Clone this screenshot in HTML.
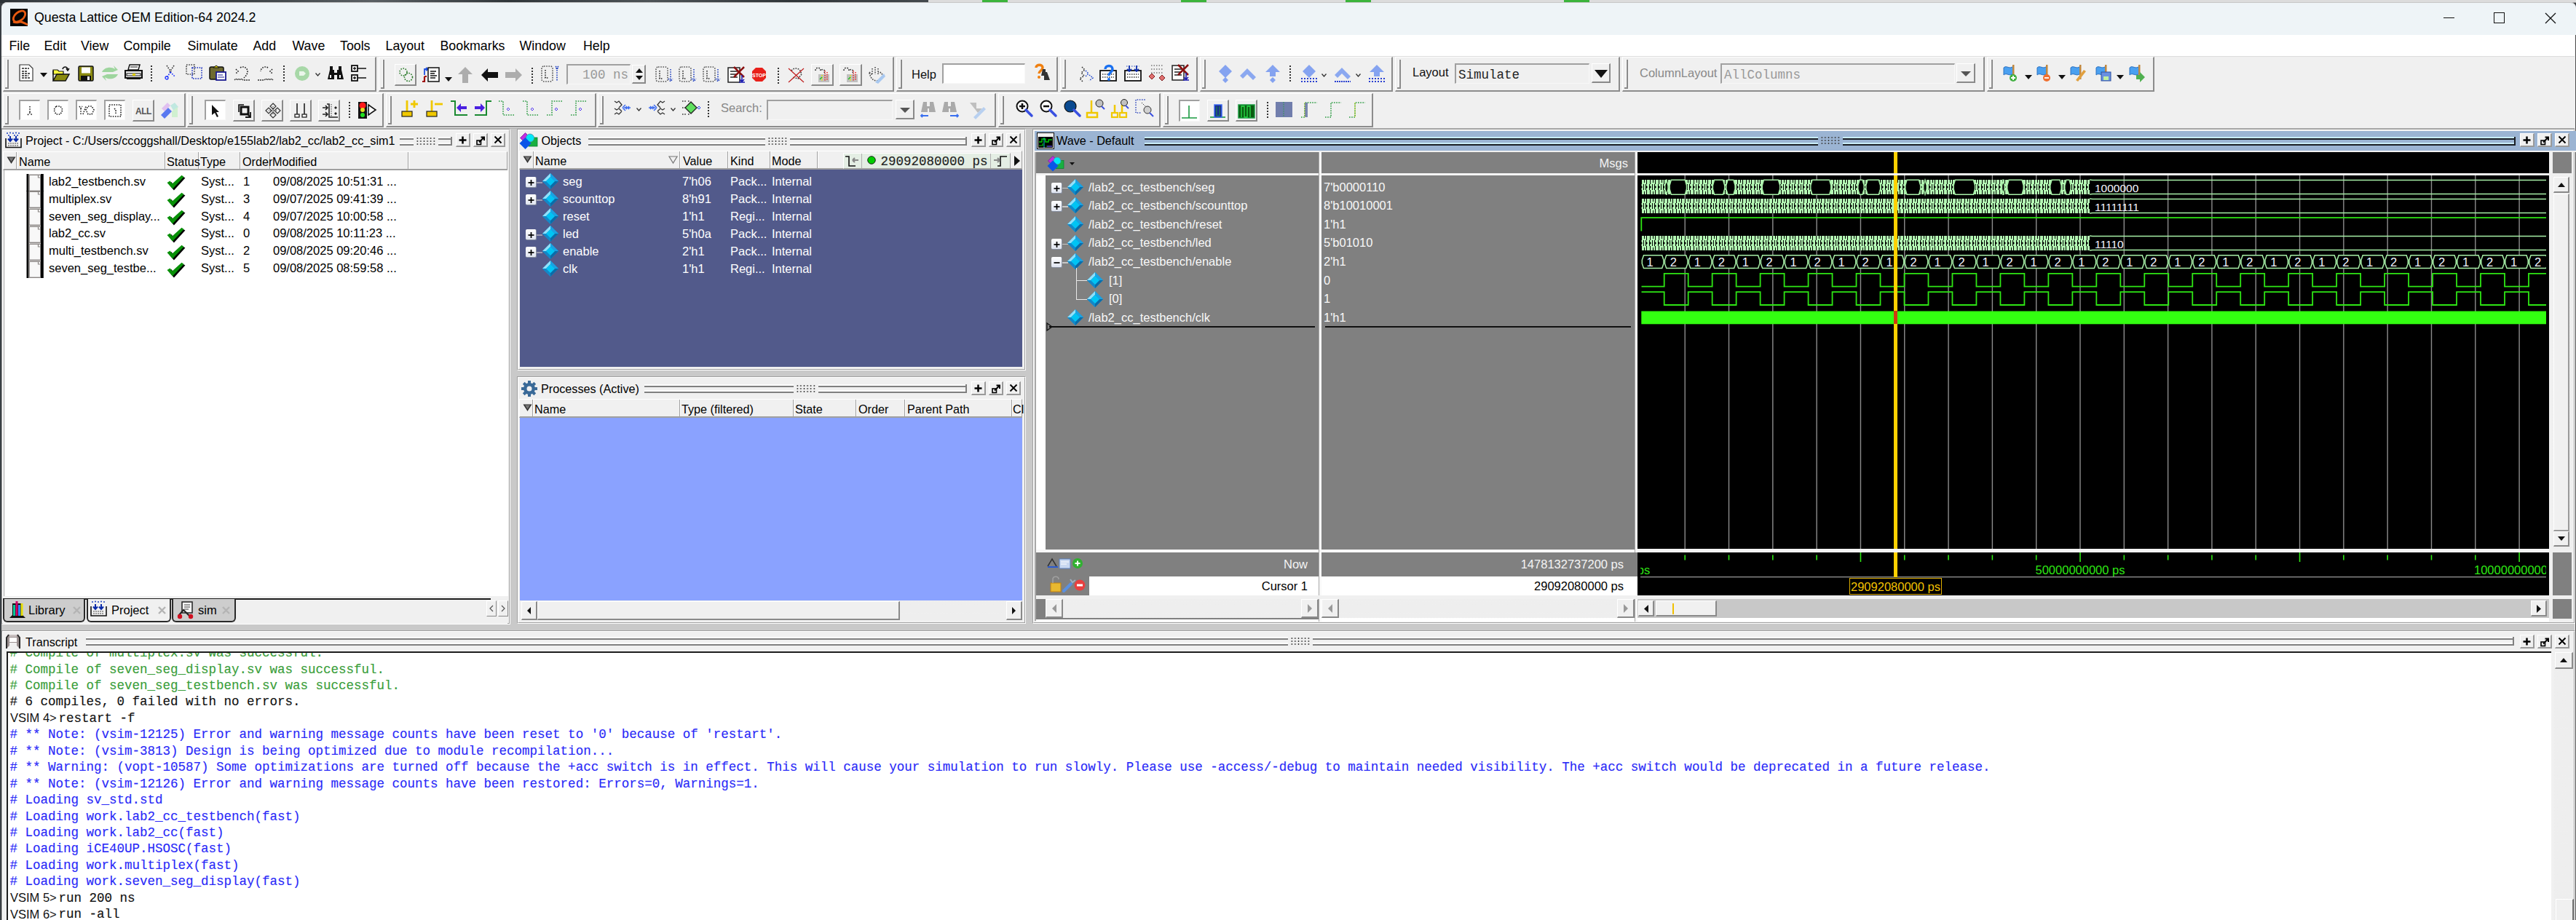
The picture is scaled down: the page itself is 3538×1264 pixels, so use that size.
<!DOCTYPE html>
<html><head><meta charset="utf-8"><style>
html,body{margin:0;padding:0;width:3538px;height:1264px;overflow:hidden;background:#3a3f44}
div{position:absolute;box-sizing:border-box}
.t{white-space:pre;line-height:1;font-family:"Liberation Sans",sans-serif}
svg{position:absolute;overflow:visible}
</style></head><body>
<div style="left:0px;top:0px;width:3538px;height:1264px;background:#3a3f44"></div>
<div style="left:0px;top:0px;width:1275px;height:4px;background:linear-gradient(90deg,#2c3236 0,#4a5054 10%,#3a4044 25%,#5a6064 40%,#30363a 55%,#4e5458 70%,#30363a 85%,#444a4e 100%)"></div>
<div style="left:1275px;top:0px;width:2263px;height:4px;background:#dcdcdc;border-bottom:1px solid #a0a0a0"></div>
<div style="left:1349px;top:0px;width:35px;height:3px;background:#3cb43c"></div>
<div style="left:1622px;top:0px;width:35px;height:3px;background:#3cb43c"></div>
<div style="left:1848px;top:0px;width:35px;height:3px;background:#3cb43c"></div>
<div style="left:2148px;top:0px;width:35px;height:3px;background:#3cb43c"></div>
<div style="left:2px;top:3px;width:3536px;height:1261px;background:#f0f0f0;border-top-left-radius:8px;border-top-right-radius:8px"></div>
<div style="left:2px;top:3px;width:3536px;height:45px;background:#eef4f7;border-top-left-radius:8px;border-top-right-radius:8px;border-top:1px solid #c8c8c8"></div>
<div style="left:3537px;top:48px;width:1px;height:1216px;background:#505050"></div>
<svg style="left:14px;top:12px;" width="24" height="24" viewBox="0 0 24 24"><rect width="24" height="24" fill="#050505"/><ellipse cx="12.5" cy="10.5" rx="9.5" ry="5.8" transform="rotate(-40 12.5 10.5)" fill="none" stroke="#e85a10" stroke-width="2.8"/><path d="M4 18 C9 20 12 18 14 18 C17 18 20 20 24 22" fill="none" stroke="#e85a10" stroke-width="2.8"/></svg>
<div class="t" style="left:47px;top:16.37px;font-size:17.8px;color:#000;font-family:'Liberation Sans', sans-serif;">Questa Lattice OEM Edition-64 2024.2</div>
<div style="left:3356px;top:24px;width:15px;height:1.2px;background:#111"></div>
<div style="left:3425px;top:17px;width:15px;height:15px;border:1.4px solid #111"></div>
<svg style="left:3495px;top:17px;" width="16" height="16" viewBox="0 0 16 16"><path d="M1 1 L15 15 M15 1 L1 15" stroke="#111" stroke-width="1.3"/></svg>
<div style="left:2px;top:48px;width:3534px;height:29px;background:#fff"></div>
<div style="left:2px;top:77px;width:3534px;height:1px;background:#dcdcdc"></div>
<div class="t" style="left:12.5px;top:54.87px;font-size:17.8px;color:#000;font-family:'Liberation Sans', sans-serif;">File</div>
<div class="t" style="left:60.5px;top:54.87px;font-size:17.8px;color:#000;font-family:'Liberation Sans', sans-serif;">Edit</div>
<div class="t" style="left:111px;top:54.87px;font-size:17.8px;color:#000;font-family:'Liberation Sans', sans-serif;">View</div>
<div class="t" style="left:169.5px;top:54.87px;font-size:17.8px;color:#000;font-family:'Liberation Sans', sans-serif;">Compile</div>
<div class="t" style="left:257.5px;top:54.87px;font-size:17.8px;color:#000;font-family:'Liberation Sans', sans-serif;">Simulate</div>
<div class="t" style="left:347.5px;top:54.87px;font-size:17.8px;color:#000;font-family:'Liberation Sans', sans-serif;">Add</div>
<div class="t" style="left:401.5px;top:54.87px;font-size:17.8px;color:#000;font-family:'Liberation Sans', sans-serif;">Wave</div>
<div class="t" style="left:467px;top:54.87px;font-size:17.8px;color:#000;font-family:'Liberation Sans', sans-serif;">Tools</div>
<div class="t" style="left:529.5px;top:54.87px;font-size:17.8px;color:#000;font-family:'Liberation Sans', sans-serif;">Layout</div>
<div class="t" style="left:604.5px;top:54.87px;font-size:17.8px;color:#000;font-family:'Liberation Sans', sans-serif;">Bookmarks</div>
<div class="t" style="left:713.5px;top:54.87px;font-size:17.8px;color:#000;font-family:'Liberation Sans', sans-serif;">Window</div>
<div class="t" style="left:801px;top:54.87px;font-size:17.8px;color:#000;font-family:'Liberation Sans', sans-serif;">Help</div>
<div style="left:4px;top:78px;width:513px;height:48px;border-top:1px solid #fff;border-left:1px solid #fff;border-right:2px solid #8c8c8c;border-bottom:2px solid #8c8c8c"></div>
<div style="left:9px;top:82px;width:1px;height:38px;background:#fff"></div>
<div style="left:10px;top:82px;width:2px;height:40px;background:#8a8a8a"></div>
<div style="left:7px;top:120px;width:5px;height:2px;background:#8a8a8a"></div>
<div style="left:520px;top:78px;width:708px;height:48px;border-top:1px solid #fff;border-left:1px solid #fff;border-right:2px solid #8c8c8c;border-bottom:2px solid #8c8c8c"></div>
<div style="left:525px;top:82px;width:1px;height:38px;background:#fff"></div>
<div style="left:526px;top:82px;width:2px;height:40px;background:#8a8a8a"></div>
<div style="left:523px;top:120px;width:5px;height:2px;background:#8a8a8a"></div>
<div style="left:1231px;top:78px;width:222px;height:48px;border-top:1px solid #fff;border-left:1px solid #fff;border-right:2px solid #8c8c8c;border-bottom:2px solid #8c8c8c"></div>
<div style="left:1236px;top:82px;width:1px;height:38px;background:#fff"></div>
<div style="left:1237px;top:82px;width:2px;height:40px;background:#8a8a8a"></div>
<div style="left:1234px;top:120px;width:5px;height:2px;background:#8a8a8a"></div>
<div style="left:1456px;top:78px;width:189px;height:48px;border-top:1px solid #fff;border-left:1px solid #fff;border-right:2px solid #8c8c8c;border-bottom:2px solid #8c8c8c"></div>
<div style="left:1461px;top:82px;width:1px;height:38px;background:#fff"></div>
<div style="left:1462px;top:82px;width:2px;height:40px;background:#8a8a8a"></div>
<div style="left:1459px;top:120px;width:5px;height:2px;background:#8a8a8a"></div>
<div style="left:1648px;top:78px;width:265px;height:48px;border-top:1px solid #fff;border-left:1px solid #fff;border-right:2px solid #8c8c8c;border-bottom:2px solid #8c8c8c"></div>
<div style="left:1653px;top:82px;width:1px;height:38px;background:#fff"></div>
<div style="left:1654px;top:82px;width:2px;height:40px;background:#8a8a8a"></div>
<div style="left:1651px;top:120px;width:5px;height:2px;background:#8a8a8a"></div>
<div style="left:1916px;top:78px;width:309px;height:48px;border-top:1px solid #fff;border-left:1px solid #fff;border-right:2px solid #8c8c8c;border-bottom:2px solid #8c8c8c"></div>
<div style="left:1921px;top:82px;width:1px;height:38px;background:#fff"></div>
<div style="left:1922px;top:82px;width:2px;height:40px;background:#8a8a8a"></div>
<div style="left:1919px;top:120px;width:5px;height:2px;background:#8a8a8a"></div>
<div style="left:2228px;top:78px;width:498px;height:48px;border-top:1px solid #fff;border-left:1px solid #fff;border-right:2px solid #8c8c8c;border-bottom:2px solid #8c8c8c"></div>
<div style="left:2233px;top:82px;width:1px;height:38px;background:#fff"></div>
<div style="left:2234px;top:82px;width:2px;height:40px;background:#8a8a8a"></div>
<div style="left:2231px;top:120px;width:5px;height:2px;background:#8a8a8a"></div>
<div style="left:2729px;top:78px;width:230px;height:48px;border-top:1px solid #fff;border-left:1px solid #fff;border-right:2px solid #8c8c8c;border-bottom:2px solid #8c8c8c"></div>
<div style="left:2734px;top:82px;width:1px;height:38px;background:#fff"></div>
<div style="left:2735px;top:82px;width:2px;height:40px;background:#8a8a8a"></div>
<div style="left:2732px;top:120px;width:5px;height:2px;background:#8a8a8a"></div>
<div style="left:4px;top:128px;width:251px;height:47px;border-top:1px solid #fff;border-left:1px solid #fff;border-right:2px solid #8c8c8c;border-bottom:2px solid #8c8c8c"></div>
<div style="left:9px;top:132px;width:1px;height:37px;background:#fff"></div>
<div style="left:10px;top:132px;width:2px;height:39px;background:#8a8a8a"></div>
<div style="left:7px;top:169px;width:5px;height:2px;background:#8a8a8a"></div>
<div style="left:257px;top:128px;width:270px;height:47px;border-top:1px solid #fff;border-left:1px solid #fff;border-right:2px solid #8c8c8c;border-bottom:2px solid #8c8c8c"></div>
<div style="left:262px;top:132px;width:1px;height:37px;background:#fff"></div>
<div style="left:263px;top:132px;width:2px;height:39px;background:#8a8a8a"></div>
<div style="left:260px;top:169px;width:5px;height:2px;background:#8a8a8a"></div>
<div style="left:530px;top:128px;width:289px;height:47px;border-top:1px solid #fff;border-left:1px solid #fff;border-right:2px solid #8c8c8c;border-bottom:2px solid #8c8c8c"></div>
<div style="left:535px;top:132px;width:1px;height:37px;background:#fff"></div>
<div style="left:536px;top:132px;width:2px;height:39px;background:#8a8a8a"></div>
<div style="left:533px;top:169px;width:5px;height:2px;background:#8a8a8a"></div>
<div style="left:821px;top:128px;width:547px;height:47px;border-top:1px solid #fff;border-left:1px solid #fff;border-right:2px solid #8c8c8c;border-bottom:2px solid #8c8c8c"></div>
<div style="left:826px;top:132px;width:1px;height:37px;background:#fff"></div>
<div style="left:827px;top:132px;width:2px;height:39px;background:#8a8a8a"></div>
<div style="left:824px;top:169px;width:5px;height:2px;background:#8a8a8a"></div>
<div style="left:1371px;top:128px;width:223px;height:47px;border-top:1px solid #fff;border-left:1px solid #fff;border-right:2px solid #8c8c8c;border-bottom:2px solid #8c8c8c"></div>
<div style="left:1376px;top:132px;width:1px;height:37px;background:#fff"></div>
<div style="left:1377px;top:132px;width:2px;height:39px;background:#8a8a8a"></div>
<div style="left:1374px;top:169px;width:5px;height:2px;background:#8a8a8a"></div>
<div style="left:1597px;top:128px;width:289px;height:47px;border-top:1px solid #fff;border-left:1px solid #fff;border-right:2px solid #8c8c8c;border-bottom:2px solid #8c8c8c"></div>
<div style="left:1602px;top:132px;width:1px;height:37px;background:#fff"></div>
<div style="left:1603px;top:132px;width:2px;height:39px;background:#8a8a8a"></div>
<div style="left:1600px;top:169px;width:5px;height:2px;background:#8a8a8a"></div>
<div style="left:2px;top:176px;width:3534px;height:1px;background:#a8a8a8"></div>
<svg style="left:26px;top:88px" width="21" height="24" viewBox="0 0 21 24"><path d="M1 1 H14 L19 6 V23 H1 Z" fill="#fff" stroke="#333" stroke-width="1.2"/><path d="M19 6 V23 H2" stroke="#888" stroke-width="1.5" fill="none"/><path d="M4 6 H14 M4 10 H11 M4 13 H15 M4 16 H13 M4 19 H15" stroke="#222" stroke-width="1.4" stroke-dasharray="3 1"/></svg>
<svg style="left:55px;top:100px" width="10" height="6" viewBox="0 0 10 6"><path d="M0 0 H10 L5 6 Z" fill="#111"/></svg>
<svg style="left:72px;top:89px" width="24" height="23" viewBox="0 0 24 23"><path d="M14 6 C15 2 20 2 21 6 M19 5 L21 8 L23 5" fill="none" stroke="#111" stroke-width="1.5"/><path d="M1 7 H7 L9 9 H15 V13 H1 Z" fill="#ffff40" stroke="#111" stroke-width="1.2"/><path d="M1 22 V8 M1 22 L6 13 H23 L18 22 Z" fill="#8a8a10" stroke="#111" stroke-width="1.5"/></svg>
<svg style="left:107px;top:90px" width="22" height="22" viewBox="0 0 22 22"><rect x="1" y="1" width="20" height="20" rx="1.5" fill="#8a8a10" stroke="#111" stroke-width="1.5"/><rect x="5" y="2.5" width="12" height="8" fill="#fff"/><rect x="4" y="14" width="14" height="7" fill="#111"/><rect x="13" y="15" width="3" height="5" fill="#fff"/></svg>
<svg style="left:138px;top:88px" width="26" height="25" viewBox="0 0 26 25"><path d="M2 11 C5 4 15 3 20 7 L18 2 L24 8 L17 11 Z" fill="#8fd08f" opacity="0.85"/><path d="M24 14 C21 21 11 22 6 18 L8 23 L2 17 L9 14 Z" fill="#8fd08f" opacity="0.85"/></svg>
<svg style="left:171px;top:88px" width="26" height="23" viewBox="0 0 26 23"><path d="M7 1 H21 L19 8 H5 Z" fill="#fff" stroke="#111" stroke-width="1.5"/><path d="M8 4 H18" stroke="#111"/><path d="M1 9 H24 V19 H1 Z" fill="#e8e8e8" stroke="#111" stroke-width="2"/><rect x="3" y="13" width="19" height="3" fill="#fff" stroke="#111"/><rect x="11" y="13" width="4" height="3" fill="#e0d000"/><path d="M3 20 H22" stroke="#111" stroke-width="2"/></svg>
<div style="left:207px;top:90px;width:2px;height:23px;background-image:linear-gradient(#333 50%,transparent 50%);background-size:2px 4px"></div>
<svg style="left:226px;top:89px" width="16" height="22" viewBox="0 0 16 22"><path d="M3 1 L9 10 M13 1 L7 10" stroke="#333" stroke-width="1.6" stroke-dasharray="1.6 1.6" fill="none"/><path d="M8 10 L3 18 M8 10 L14 16" stroke="#1a30ff" stroke-width="1.6" stroke-dasharray="1.6 1.6" fill="none"/><circle cx="3" cy="18" r="2" fill="none" stroke="#1a30ff" stroke-width="1.3"/></svg>
<svg style="left:255px;top:88px" width="24" height="21" viewBox="0 0 24 21"><rect x="1" y="1" width="11" height="13" stroke="#444" stroke-width="1.6" stroke-dasharray="1.6 1.6" fill="none"/><rect x="9" y="5" width="13" height="15" stroke="#1a30c0" stroke-width="1.6" stroke-dasharray="1.6 1.6" fill="none"/></svg>
<svg style="left:287px;top:89px" width="25" height="22" viewBox="0 0 25 22"><rect x="1" y="3" width="19" height="17" rx="2" fill="#6e6a30" stroke="#111" stroke-width="1.5"/><path d="M6 4 L10 1 L14 4 Z" fill="#f0e000" stroke="#111"/><rect x="10" y="10" width="13" height="11" fill="#fff" stroke="#1a1a90" stroke-width="1.8"/><path d="M12 14 H19 M12 17 H21" stroke="#1a1a90" stroke-width="1.2"/></svg>
<svg style="left:321px;top:90px" width="24" height="22" viewBox="0 0 24 22"><path d="M3 5 L6 8 L3 11 M9 3 C14 0 19 4 19 8 C19 12 16 15 14 17" stroke="#222" stroke-width="1.6" stroke-dasharray="1.6 1.6" fill="none"/><path d="M1 20 L3 18 L5 20 L7 18 L9 20 L11 18 L13 20 H22" fill="none" stroke="#333" stroke-width="1.3" stroke-dasharray="2 1"/></svg>
<svg style="left:353px;top:90px" width="24" height="22" viewBox="0 0 24 22"><path d="M21 5 L18 8 L21 11 M15 3 C10 0 5 4 5 8" stroke="#222" stroke-width="1.6" stroke-dasharray="1.6 1.6" fill="none"/><path d="M1 20 H10 L12 18 L14 20 L16 18 L18 20 L20 18 L22 20" fill="none" stroke="#333" stroke-width="1.3" stroke-dasharray="2 1"/></svg>
<div style="left:389px;top:90px;width:2px;height:23px;background-image:linear-gradient(#333 50%,transparent 50%);background-size:2px 4px"></div>
<svg style="left:404px;top:90px" width="22" height="22" viewBox="0 0 22 22"><circle cx="11" cy="11" r="10" fill="#a8d8a8"/><path d="M7 8 H13 L16 11 L13 14 H7 Z" fill="#eaf6ea"/></svg>
<svg style="left:433px;top:100px" width="7" height="5" viewBox="0 0 7 5"><path d="M0.5 0.5 L3.5 4 L6.5 0.5" fill="none" stroke="#333" stroke-width="1.3"/></svg>
<svg style="left:449px;top:90px" width="24" height="21" viewBox="0 0 24 21"><path d="M4 1 H8 V6 H10 V10 H14 V6 H16 V1 H20 V6 L23 19 H14 V13 H10 V19 H1 L4 6 Z" fill="#111"/><rect x="4" y="13" width="2" height="4" fill="#fff"/><rect x="17" y="13" width="2" height="4" fill="#fff"/></svg>
<svg style="left:482px;top:89px" width="22" height="24" viewBox="0 0 22 24"><rect x="1" y="1" width="8" height="8" fill="#fff" stroke="#111" stroke-width="1.8"/><rect x="1" y="14" width="8" height="8" fill="#fff" stroke="#111" stroke-width="1.8"/><path d="M3 5 H7 M5 3 V7 M3 18 H7 M5 16 V20 M9 5 H21 M9 18 H21" stroke="#111" stroke-width="1.3"/></svg>
<div style="left:542px;top:88px;width:30px;height:30px;background:#f0f0f0;border-top:1px solid #fff;border-left:1px solid #fff;border-right:2px solid #8a8a8a;border-bottom:2px solid #8a8a8a"></div>
<svg style="left:547px;top:92px" width="22" height="22" viewBox="0 0 22 22"><circle cx="7" cy="7" r="5" stroke="#2a7a2a" stroke-width="1.6" stroke-dasharray="1.6 1.6" fill="none"/><circle cx="14" cy="14" r="5.5" stroke="#2a7a2a" stroke-width="1.6" stroke-dasharray="1.6 1.6" fill="none"/></svg>
<svg style="left:579px;top:91px" width="28" height="24" viewBox="0 0 28 24"><path d="M4 12 V4 H8 M6 2 L9 4 L6 6" fill="none" stroke="#2050e0" stroke-width="1.8"/><path d="M4 14 V21 H1 M4 14 H7" fill="none" stroke="#a01010" stroke-width="2.2"/><rect x="9" y="2" width="15" height="19" fill="#fff" stroke="#111" stroke-width="1.5"/><path d="M12 7 H20 M12 10 H18 M12 13 H21 M12 16 H19" stroke="#111" stroke-width="1.4"/></svg>
<svg style="left:611px;top:106px" width="10" height="6" viewBox="0 0 10 6"><path d="M0 0 H10 L5 6 Z" fill="#111"/></svg>
<svg style="left:628px;top:91px" width="22" height="24" viewBox="0 0 22 24"><path d="M11 1 L21 11 H15 V23 H7 V11 H1 Z" fill="#909090" opacity="0.7"/></svg>
<svg style="left:660px;top:93px" width="25" height="20" viewBox="0 0 25 20"><path d="M1 10 L10 1 V6 H24 V14 H10 V19 Z" fill="#111"/></svg>
<svg style="left:693px;top:93px" width="25" height="20" viewBox="0 0 25 20"><path d="M24 10 L15 1 V6 H1 V14 H15 V19 Z" fill="#909090" opacity="0.7"/></svg>
<div style="left:730px;top:93px;width:2px;height:23px;background-image:linear-gradient(#333 50%,transparent 50%);background-size:2px 4px"></div>
<svg style="left:743px;top:90px" width="26" height="24" viewBox="0 0 26 24"><rect x="1" y="1" width="15" height="21" rx="3" stroke="#555" stroke-width="1.6" stroke-dasharray="1.6 1.6" fill="none"/><path d="M6 6 V17 H11" stroke="#222" stroke-width="1.6" stroke-dasharray="1.6 1.6" fill="none"/><path d="M20 1 L24 5 M24 1 L20 5 M22 6 V22" stroke="#2040c0" stroke-width="1.6" stroke-dasharray="1.6 1.6" fill="none"/></svg>
<div style="left:778px;top:88px;width:88px;height:28px;background:#f0f0f0;border-top:2px solid #a0a0a0;border-left:2px solid #a0a0a0;border-right:1px solid #f8f8f8;border-bottom:1px solid #f8f8f8"></div>
<div class="t" style="left:800px;top:94.7px;font-size:17.5px;color:#999;font-family:'Liberation Mono',monospace">100 ns</div>
<div style="left:868px;top:89px;width:19px;height:26px;background:#f0f0f0;border-top:1px solid #fff;border-left:1px solid #fff;border-right:2px solid #8a8a8a;border-bottom:2px solid #8a8a8a"></div>
<svg style="left:872px;top:92px" width="12" height="20" viewBox="0 0 12 20"><path d="M1 8 L6 2 L11 8 Z M1 12 L6 18 L11 12 Z" fill="#111"/></svg>
<svg style="left:900px;top:91px" width="26" height="23" viewBox="0 0 26 23"><rect x="1" y="1" width="16" height="20" rx="3" stroke="#555" stroke-width="1.6" stroke-dasharray="1.6 1.6" fill="none"/><path d="M6 6 V17 H11" stroke="#222" stroke-width="1.6" stroke-dasharray="1.6 1.6" fill="none"/><path d="M21 4 V20 M18 17 L21 21 L24 17" stroke="#2040c0" stroke-width="1.6" stroke-dasharray="1.6 1.6" fill="none"/></svg>
<svg style="left:932px;top:91px" width="26" height="23" viewBox="0 0 26 23"><rect x="1" y="1" width="16" height="20" rx="3" stroke="#555" stroke-width="1.6" stroke-dasharray="1.6 1.6" fill="none"/><path d="M6 6 V17 H11" stroke="#222" stroke-width="1.6" stroke-dasharray="1.6 1.6" fill="none"/><path d="M21 4 V20 M18 17 L21 21 L24 17" stroke="#2040c0" stroke-width="1.6" stroke-dasharray="1.6 1.6" fill="none"/></svg>
<svg style="left:965px;top:91px" width="26" height="23" viewBox="0 0 26 23"><rect x="1" y="1" width="16" height="20" rx="3" stroke="#555" stroke-width="1.6" stroke-dasharray="1.6 1.6" fill="none"/><path d="M6 6 V17 H11" stroke="#222" stroke-width="1.6" stroke-dasharray="1.6 1.6" fill="none"/><path d="M21 4 V20 M18 17 L21 21 L24 17" stroke="#2040c0" stroke-width="1.6" stroke-dasharray="1.6 1.6" fill="none"/></svg>
<svg style="left:999px;top:91px" width="26" height="25" viewBox="0 0 26 25"><rect x="1" y="2" width="16" height="20" fill="#fff" stroke="#222" stroke-width="1.5"/><path d="M4 7 H14 M4 11 H12 M4 15 H14" stroke="#222" stroke-width="1.3"/><path d="M9 1 L23 15 M23 1 L9 15" stroke="#8a1010" stroke-width="2.5"/><path d="M20 12 V22 M16 22 H24 M17 18 L20 21 L23 18" stroke="#1a1ab0" stroke-width="1.6" fill="none"/></svg>
<svg style="left:1032px;top:92px" width="21" height="21" viewBox="0 0 21 21"><path d="M6 1 H15 L20 6 V15 L15 20 H6 L1 15 V6 Z" fill="#e8201a"/><text x="10.5" y="13.5" font-size="7" font-family="Liberation Sans" font-weight="bold" fill="#fff" text-anchor="middle">STOP</text></svg>
<div style="left:1068px;top:93px;width:2px;height:23px;background-image:linear-gradient(#333 50%,transparent 50%);background-size:2px 4px"></div>
<svg style="left:1082px;top:92px" width="24" height="22" viewBox="0 0 24 22"><path d="M5 5 C8 1 14 1 17 5 L19 10 L14 16 L6 14" stroke="#333" stroke-width="1.6" stroke-dasharray="1.6 1.6" fill="none"/><path d="M1 2 L22 21 M22 2 L1 21" stroke="#c02020" stroke-width="1.2"/></svg>
<div style="left:1114px;top:88px;width:31px;height:30px;background:#f0f0f0;border-top:1px solid #fff;border-left:1px solid #fff;border-right:2px solid #8a8a8a;border-bottom:2px solid #8a8a8a"></div>
<svg style="left:1118px;top:91px" width="24" height="24" viewBox="0 0 24 24"><path d="M2 6 C2 1 9 1 9 6 C12 3 16 5 14 9" stroke="#333" stroke-width="1.6" stroke-dasharray="1.6 1.6" fill="none"/><rect x="6" y="11" width="15" height="11" fill="#a0a0a0" opacity="0.6"/><path d="M15 6 V20 M18 8 V20" stroke="#f02020" stroke-width="1.5" stroke-dasharray="1.5 1.5"/><path d="M11 12 V20" stroke="#e8e020" stroke-width="2" stroke-dasharray="1.5 1.5"/><path d="M8 18 L11 15" stroke="#20c020" stroke-width="1.5"/></svg>
<div style="left:1153px;top:88px;width:31px;height:30px;background:#f0f0f0;border-top:1px solid #fff;border-left:1px solid #fff;border-right:2px solid #8a8a8a;border-bottom:2px solid #8a8a8a"></div>
<svg style="left:1157px;top:91px" width="24" height="24" viewBox="0 0 24 24"><path d="M2 6 C2 1 9 1 9 6 C12 3 16 5 14 9" stroke="#333" stroke-width="1.6" stroke-dasharray="1.6 1.6" fill="none"/><rect x="6" y="11" width="15" height="11" fill="#a0a0a0" opacity="0.6"/><path d="M15 6 V20 M18 8 V20" stroke="#f02020" stroke-width="1.5" stroke-dasharray="1.5 1.5"/><path d="M11 12 V20" stroke="#e8e020" stroke-width="2" stroke-dasharray="1.5 1.5"/><path d="M8 18 L11 15" stroke="#20c020" stroke-width="1.5"/></svg>
<svg style="left:1192px;top:91px" width="24" height="24" viewBox="0 0 24 24"><path d="M10 1 V11 M6 3 V12 M14 3 V12 M2 8 L6 12 M2 9 C4 18 8 20 14 20 L20 14 C20 10 18 8 14 8" stroke="#444" stroke-width="1.6" stroke-dasharray="1.6 1.6" fill="none"/><path d="M10 22 L22 10 L24 14 L14 24 Z" fill="#a8c8f0"/></svg>
<div class="t" style="left:1252px;top:93.975px;font-size:16.5px;color:#111">Help</div>
<div style="left:1294px;top:87px;width:114px;height:28px;background:#fff;border-top:2px solid #a0a0a0;border-left:2px solid #a0a0a0;border-right:1px solid #f8f8f8;border-bottom:1px solid #f8f8f8"></div>
<svg style="left:1418px;top:88px" width="26" height="24" viewBox="0 0 26 24"><path d="M5 5 C5 0 14 0 14 5 C14 9 9 9 9 13" fill="none" stroke="#f08010" stroke-width="3.5"/><circle cx="9" cy="18" r="2" fill="#f08010"/><path d="M14 7 H18 V11 H20 L24 22 H16 V16 H12" fill="#333"/></svg>
<svg style="left:1479px;top:91px" width="24" height="22" viewBox="0 0 24 22"><path d="M7 1 L11 5 L6 9 L10 13 L4 17 L8 21" stroke="#333" stroke-width="1.6" stroke-dasharray="1.6 1.6" fill="none"/><path d="M12 6 L16 10 L12 14 M17 12 L22 16 L17 20" stroke="#2a50d0" stroke-width="1.6" stroke-dasharray="1.6 1.6" fill="none"/></svg>
<svg style="left:1510px;top:89px" width="26" height="24" viewBox="0 0 26 24"><rect x="1" y="8" width="22" height="14" fill="#fff" stroke="#111" stroke-width="1.8"/><path d="M4 13 H20 M4 17 H20" stroke="#333" stroke-width="1.3" stroke-dasharray="1.5 1.5"/><path d="M8 6 C8 0 18 0 18 6 C18 10 13 10 13 15" fill="none" stroke="#1a70f0" stroke-width="3.5"/><circle cx="13" cy="20" r="2" fill="#1a70f0"/></svg>
<svg style="left:1544px;top:89px" width="24" height="23" viewBox="0 0 24 23"><rect x="1" y="8" width="22" height="14" fill="#fff" stroke="#111" stroke-width="1.8"/><path d="M4 13 H20 M4 17 H20" stroke="#333" stroke-width="1.3" stroke-dasharray="1.5 1.5"/><path d="M7 1 V9 M4 6 L7 9 L10 6 M17 1 V9 M14 6 L17 9 L20 6" stroke="#0a2aa8" stroke-width="1.8" fill="none"/><path d="M3 2 H21" stroke="#1a40c0" stroke-dasharray="1.5 2"/></svg>
<svg style="left:1577px;top:88px" width="24" height="25" viewBox="0 0 24 25"><path d="M4 2 H20 M4 7 H20 M4 12 H20" stroke="#777" stroke-width="1.5" stroke-dasharray="1.5 2"/><path d="M5 13 L9 17 L5 21 L1 17 Z M19 15 L23 19 L19 23 L15 19 Z" fill="#e07070" stroke="#802020"/></svg>
<svg style="left:1609px;top:88px" width="26" height="25" viewBox="0 0 26 25"><rect x="1" y="2" width="16" height="20" fill="#fff" stroke="#222" stroke-width="1.5"/><path d="M4 7 H14 M4 11 H12 M4 15 H14" stroke="#222" stroke-width="1.3"/><path d="M9 1 L23 15 M23 1 L9 15" stroke="#8a1010" stroke-width="2.5"/><path d="M20 12 V22 M16 22 H24 M17 18 L20 21 L23 18" stroke="#1a1ab0" stroke-width="1.6" fill="none"/></svg>
<svg style="left:1672px;top:88px" width="22" height="26" viewBox="0 0 22 26"><path d="M11 1 L20 10 L11 19 L2 10 Z" fill="#6a90f0" opacity="0.8"/><path d="M11 18 L15 22 L11 26 L7 22 Z" fill="#6a90f0" opacity="0.8"/></svg>
<svg style="left:1701px;top:90px" width="26" height="22" viewBox="0 0 26 22"><path d="M2 14 L12 4 L24 16 L20 20 L12 12 L6 18 Z" fill="#6a90f0" opacity="0.75"/></svg>
<svg style="left:1737px;top:88px" width="22" height="26" viewBox="0 0 22 26"><path d="M11 1 L21 11 H15 V17 H7 V11 H1 Z" fill="#6a90f0" opacity="0.8"/><path d="M11 18 L15 22 L11 26 L7 22 Z" fill="#6a90f0" opacity="0.8"/></svg>
<div style="left:1771px;top:90px;width:2px;height:23px;background-image:linear-gradient(#333 50%,transparent 50%);background-size:2px 4px"></div>
<svg style="left:1786px;top:88px" width="24" height="26" viewBox="0 0 24 26"><path d="M12 1 L21 10 L12 19 L3 10 Z" fill="#6a90f0" opacity="0.8"/><path d="M1 20 H23 M1 24 H23" stroke="#2a40d0" stroke-width="2" stroke-dasharray="2 2"/></svg>
<svg style="left:1815px;top:101px" width="7" height="5" viewBox="0 0 7 5"><path d="M0.5 0.5 L3.5 4 L6.5 0.5" fill="none" stroke="#333" stroke-width="1.3"/></svg>
<svg style="left:1831px;top:89px" width="26" height="24" viewBox="0 0 26 24"><path d="M2 14 L12 4 L24 16 L20 20 L12 12 L6 18 Z" fill="#6a90f0" opacity="0.75"/><path d="M2 23 H24" stroke="#2a40d0" stroke-width="2" stroke-dasharray="2 1"/></svg>
<svg style="left:1862px;top:101px" width="7" height="5" viewBox="0 0 7 5"><path d="M0.5 0.5 L3.5 4 L6.5 0.5" fill="none" stroke="#333" stroke-width="1.3"/></svg>
<svg style="left:1879px;top:88px" width="24" height="26" viewBox="0 0 24 26"><path d="M12 1 L22 11 H16 V17 H8 V11 H2 Z" fill="#6a90f0" opacity="0.8"/><path d="M1 20 H23 M1 24 H23" stroke="#2a40d0" stroke-width="2" stroke-dasharray="2 2"/></svg>
<div class="t" style="left:1940px;top:91.27499999999999px;font-size:16.5px;color:#111">Layout</div>
<div style="left:1998px;top:87px;width:185px;height:28px;background:#f0f0f0;border-top:2px solid #a0a0a0;border-left:2px solid #a0a0a0;border-right:1px solid #f8f8f8;border-bottom:1px solid #f8f8f8"></div>
<div class="t" style="left:2003px;top:94.7px;font-size:17.5px;color:#222;font-family:'Liberation Mono',monospace">Simulate</div>
<div style="left:2186px;top:87px;width:26px;height:27px;background:#f0f0f0;border-top:1px solid #fff;border-left:1px solid #fff;border-right:2px solid #8a8a8a;border-bottom:2px solid #8a8a8a"></div>
<svg style="left:2189px;top:95px" width="20" height="13" viewBox="0 0 20 13"><path d="M1 1 H19 L10 12 Z" fill="#111"/></svg>
<div class="t" style="left:2252px;top:91.975px;font-size:16.5px;color:#888">ColumnLayout</div>
<div style="left:2363px;top:87px;width:322px;height:28px;background:#f0f0f0;border-top:2px solid #a0a0a0;border-left:2px solid #a0a0a0;border-right:1px solid #f8f8f8;border-bottom:1px solid #f8f8f8"></div>
<div class="t" style="left:2368px;top:94.7px;font-size:17.5px;color:#999;font-family:'Liberation Mono',monospace">AllColumns</div>
<div style="left:2687px;top:87px;width:26px;height:27px;background:#f0f0f0;border-top:1px solid #fff;border-left:1px solid #fff;border-right:2px solid #8a8a8a;border-bottom:2px solid #8a8a8a"></div>
<svg style="left:2692px;top:97px" width="16" height="8" viewBox="0 0 16 8"><path d="M1 1 H15 L8 8 Z" fill="#555"/></svg>
<svg style="left:2750px;top:88px" width="24" height="26" viewBox="0 0 24 26"><path d="M2 5 C6 1 10 8 15 3 V13 C10 18 6 11 2 15 Z" fill="#4aa0f0" stroke="#2a70c0"/><rect x="14" y="1" width="2.5" height="20" fill="#c08840"/><circle cx="15" cy="19" r="5" fill="#40b040"/><path d="M12 19 H18 M15 16 V22" stroke="#fff" stroke-width="1.8"/></svg>
<svg style="left:2781px;top:103px" width="10" height="6" viewBox="0 0 10 6"><path d="M0 0 H10 L5 6 Z" fill="#111"/></svg>
<svg style="left:2796px;top:88px" width="24" height="26" viewBox="0 0 24 26"><path d="M2 5 C6 1 10 8 15 3 V13 C10 18 6 11 2 15 Z" fill="#4aa0f0" stroke="#2a70c0"/><rect x="14" y="1" width="2.5" height="20" fill="#c08840"/><circle cx="15" cy="19" r="5" fill="#f07030"/><path d="M12 19 H18" stroke="#fff" stroke-width="1.8"/></svg>
<svg style="left:2827px;top:103px" width="10" height="6" viewBox="0 0 10 6"><path d="M0 0 H10 L5 6 Z" fill="#111"/></svg>
<svg style="left:2842px;top:88px" width="24" height="26" viewBox="0 0 24 26"><path d="M2 5 C6 1 10 8 15 3 V13 C10 18 6 11 2 15 Z" fill="#4aa0f0" stroke="#2a70c0"/><rect x="14" y="1" width="2.5" height="20" fill="#c08840"/><path d="M9 22 L20 8 L23 10 L12 24 Z" fill="#e0a040"/></svg>
<svg style="left:2877px;top:88px" width="24" height="26" viewBox="0 0 24 26"><path d="M2 5 C6 1 10 8 15 3 V13 C10 18 6 11 2 15 Z" fill="#4aa0f0" stroke="#2a70c0"/><rect x="14" y="1" width="2.5" height="20" fill="#c08840"/><rect x="9" y="11" width="13" height="12" fill="#6a90e0" stroke="#2a50a0"/><rect x="12" y="17" width="7" height="5" fill="#c0f0a0"/></svg>
<svg style="left:2907px;top:103px" width="10" height="6" viewBox="0 0 10 6"><path d="M0 0 H10 L5 6 Z" fill="#111"/></svg>
<svg style="left:2923px;top:88px" width="24" height="26" viewBox="0 0 24 26"><path d="M2 5 C6 1 10 8 15 3 V13 C10 18 6 11 2 15 Z" fill="#4aa0f0" stroke="#2a70c0"/><rect x="14" y="1" width="2.5" height="20" fill="#c08840"/><path d="M11 15 H16 V11 L23 18 L16 25 V21 H11 Z" fill="#50b050"/></svg>
<div style="left:26px;top:137px;width:29px;height:28px;background:#fff;border-top:2px solid #a0a0a0;border-left:2px solid #a0a0a0;border-right:1px solid #f8f8f8;border-bottom:1px solid #f8f8f8"></div>
<div style="left:65px;top:137px;width:29px;height:28px;background:#fff;border-top:2px solid #a0a0a0;border-left:2px solid #a0a0a0;border-right:1px solid #f8f8f8;border-bottom:1px solid #f8f8f8"></div>
<div style="left:104px;top:137px;width:29px;height:28px;background:#fff;border-top:2px solid #a0a0a0;border-left:2px solid #a0a0a0;border-right:1px solid #f8f8f8;border-bottom:1px solid #f8f8f8"></div>
<div style="left:143px;top:137px;width:29px;height:28px;background:#fff;border-top:2px solid #a0a0a0;border-left:2px solid #a0a0a0;border-right:1px solid #f8f8f8;border-bottom:1px solid #f8f8f8"></div>
<svg style="left:36px;top:145px" width="10" height="14" viewBox="0 0 10 14"><path d="M5 1 V10 M2 13 L5 10 L8 13" stroke="#222" stroke-width="1.6" stroke-dasharray="1.6 1.6" fill="none"/></svg>
<svg style="left:73px;top:145px" width="14" height="13" viewBox="0 0 14 13"><path d="M4 1 H10 L13 6 L10 12 H4 L1 6 Z" stroke="#222" stroke-width="1.6" stroke-dasharray="1.6 1.6" fill="none"/></svg>
<svg style="left:108px;top:145px" width="22" height="13" viewBox="0 0 22 13"><path d="M1 1 L3 4 L5 1 M3 4 V12 M6 12 L10 1" stroke="#222" stroke-width="1.6" stroke-dasharray="1.6 1.6" fill="none"/><path d="M13 1 H18 L21 6 L18 12 H13 L10 6 Z" stroke="#222" stroke-width="1.6" stroke-dasharray="1.6 1.6" fill="none"/></svg>
<svg style="left:149px;top:143px" width="18" height="18" viewBox="0 0 18 18"><rect x="1" y="1" width="16" height="16" stroke="#222" stroke-width="1.6" stroke-dasharray="1.6 1.6" fill="none"/><path d="M8 6 L10 8 V13" stroke="#222" stroke-width="1.6" stroke-dasharray="1.6 1.6" fill="none"/></svg>
<div style="left:182px;top:137px;width:30px;height:30px;background:#f0f0f0;border-top:1px solid #fff;border-left:1px solid #fff;border-right:2px solid #8a8a8a;border-bottom:2px solid #8a8a8a"></div>
<svg style="left:186px;top:146px" width="22" height="12" viewBox="0 0 22 12"><text x="11" y="11" font-size="12" font-family="Liberation Sans" font-weight="bold" fill="#555" text-anchor="middle" letter-spacing="-0.5">ALL</text></svg>
<svg style="left:220px;top:139px" width="26" height="25" viewBox="0 0 26 25"><path d="M2 10 L10 2 L14 6 L6 14 Z" fill="#e0c0f0"/><path d="M14 6 L20 2 L25 8 L19 14 Z" fill="#c0e8e0"/><path d="M1 19 L11 9 L16 14 L6 24 Z" fill="#5a7af0"/><path d="M16 14 L24 8 V22 H16 Z" fill="#d0f0d0"/></svg>
<div style="left:281px;top:137px;width:29px;height:28px;background:#fff;border-top:2px solid #a0a0a0;border-left:2px solid #a0a0a0;border-right:1px solid #f8f8f8;border-bottom:1px solid #f8f8f8"></div>
<svg style="left:290px;top:143px" width="12" height="19" viewBox="0 0 12 19"><path d="M1 1 L11 11 H7 L10 17 L8 18 L5 12 L1 15 Z" fill="#111"/></svg>
<div style="left:320px;top:137px;width:30px;height:30px;background:#f0f0f0;border-top:1px solid #fff;border-left:1px solid #fff;border-right:2px solid #8a8a8a;border-bottom:2px solid #8a8a8a"></div>
<div style="left:359px;top:137px;width:30px;height:30px;background:#f0f0f0;border-top:1px solid #fff;border-left:1px solid #fff;border-right:2px solid #8a8a8a;border-bottom:2px solid #8a8a8a"></div>
<div style="left:398px;top:137px;width:30px;height:30px;background:#f0f0f0;border-top:1px solid #fff;border-left:1px solid #fff;border-right:2px solid #8a8a8a;border-bottom:2px solid #8a8a8a"></div>
<div style="left:437px;top:137px;width:30px;height:30px;background:#f0f0f0;border-top:1px solid #fff;border-left:1px solid #fff;border-right:2px solid #8a8a8a;border-bottom:2px solid #8a8a8a"></div>
<svg style="left:326px;top:142px" width="20" height="21" viewBox="0 0 20 21"><path d="M2 12 V2 H9" fill="none" stroke="#111" stroke-width="1.6"/><rect x="5" y="5" width="10" height="10" fill="none" stroke="#111" stroke-width="3"/><path d="M11 19 H18 V12 M13 14 L18 19" fill="none" stroke="#111" stroke-width="1.8"/></svg>
<svg style="left:364px;top:141px" width="22" height="22" viewBox="0 0 22 22"><path d="M11 1 L15 5 L11 9 L7 5 Z M11 13 L15 17 L11 21 L7 17 Z M1 11 L5 7 L9 11 L5 15 Z M21 11 L17 7 L13 11 L17 15 Z" fill="none" stroke="#333" stroke-width="1.2"/><path d="M11 5 V17 M5 11 H17" stroke="#333" stroke-dasharray="1 1"/></svg>
<svg style="left:404px;top:141px" width="18" height="22" viewBox="0 0 18 22"><path d="M4 1 V17 M14 1 V17" stroke="#222" stroke-width="1.6"/><rect x="1" y="16" width="6" height="4" fill="#fff" stroke="#222" stroke-width="1.3"/><rect x="11" y="16" width="6" height="4" fill="#fff" stroke="#222" stroke-width="1.3"/></svg>
<svg style="left:441px;top:142px" width="24" height="21" viewBox="0 0 24 21"><path d="M2 6 H9 M2 15 H9 M6 3 L9 6 L6 9 M6 12 L9 15 L6 18" stroke="#222" stroke-width="1.6" fill="none"/><path d="M8 1 H11 V19 H23" fill="none" stroke="#222" stroke-width="1.6"/><path d="M14 1 V19" stroke="#333" stroke-dasharray="1.5 1.5"/><path d="M20 4 L22 6 L20 8 L18 6 Z M20 12 L22 14 L20 16 L18 14 Z" fill="#222"/></svg>
<div style="left:479px;top:140px;width:2px;height:24px;background-image:linear-gradient(#333 50%,transparent 50%);background-size:2px 4px"></div>
<svg style="left:491px;top:139px" width="28" height="25" viewBox="0 0 28 25"><rect x="1" y="1" width="12" height="23" fill="#111"/><circle cx="7" cy="6" r="4.5" fill="#ff1a1a"/><circle cx="7" cy="12" r="3" fill="#e0e020"/><circle cx="7" cy="19" r="3" fill="#20e020"/><path d="M15 5 L25 12 L15 19 Z" fill="#fff" stroke="#111" stroke-width="1.6"/><path d="M13 9 H15 M13 15 H15" stroke="#5ab0f0"/></svg>
<svg style="left:551px;top:137px" width="24" height="24" viewBox="0 0 24 24"><path d="M8 1 V16" stroke="#f0c800" stroke-width="2.8"/><rect x="1" y="16" width="14" height="7" fill="#f0c800" stroke="#222" stroke-width="1.2"/><path d="M13 6 H23 M18 1 V11" stroke="#f0c800" stroke-width="2.8"/></svg>
<svg style="left:585px;top:137px" width="24" height="24" viewBox="0 0 24 24"><path d="M8 1 V16" stroke="#f0c800" stroke-width="2.8"/><rect x="1" y="16" width="14" height="7" fill="#f0c800" stroke="#222" stroke-width="1.2"/><path d="M12 6 H23" stroke="#f0c800" stroke-width="2.8"/></svg>
<svg style="left:618px;top:138px" width="24" height="22" viewBox="0 0 24 22"><path d="M1 1 H7 V20 H24" fill="none" stroke="#1a8a30" stroke-width="2"/><path d="M9 10 L15 4 V8 H23 V12 H15 V16 Z" fill="#4a20e0"/></svg>
<svg style="left:651px;top:138px" width="24" height="22" viewBox="0 0 24 22"><path d="M24 1 H17 V20 H1" fill="none" stroke="#1a8a30" stroke-width="2"/><path d="M15 10 L9 4 V8 H1 V12 H9 V16 Z" fill="#4a20e0"/></svg>
<svg style="left:684px;top:138px" width="24" height="22" viewBox="0 0 24 22"><path d="M1 1 H7 V20 H23" stroke="#2a9a40" stroke-width="1.6" stroke-dasharray="1.6 1.6" fill="none"/><path d="M12 12 L14 10 L16 12 L14 14 Z" fill="none" stroke="#5a40f0"/></svg>
<svg style="left:717px;top:138px" width="24" height="22" viewBox="0 0 24 22"><path d="M1 1 H7 V20 H23" stroke="#2a9a40" stroke-width="1.6" stroke-dasharray="1.6 1.6" fill="none"/><path d="M12 12 L14 10 L16 12 L14 14 Z" fill="none" stroke="#5a40f0"/></svg>
<svg style="left:750px;top:138px" width="24" height="22" viewBox="0 0 24 22"><path d="M1 20 H8 V1 H23" stroke="#2a9a40" stroke-width="1.6" stroke-dasharray="1.6 1.6" fill="none"/><path d="M12 12 L14 10 L16 12 L14 14 Z" fill="none" stroke="#5a40f0"/></svg>
<svg style="left:783px;top:138px" width="24" height="22" viewBox="0 0 24 22"><path d="M1 20 H8 V1 H23" stroke="#2a9a40" stroke-width="1.6" stroke-dasharray="1.6 1.6" fill="none"/><path d="M12 12 L14 10 L16 12 L14 14 Z" fill="none" stroke="#5a40f0"/></svg>
<svg style="left:843px;top:137px" width="24" height="22" viewBox="0 0 24 22"><path d="M1 2 L4 4 L7 2 L11 7 L7 11 M1 12 L4 14 L7 12 L11 16 M1 20 L4 18 L7 20 L11 16" fill="none" stroke="#333" stroke-width="1.3"/><path d="M12 11 L16 7 M12 11 L16 15 M14 11 H23 M18 9 L16 11 L18 13 M21 9 L19 11 L21 13" stroke="#3a6af0" stroke-width="1.5" fill="none"/></svg>
<svg style="left:874px;top:148px" width="7" height="5" viewBox="0 0 7 5"><path d="M0.5 0.5 L3.5 4 L6.5 0.5" fill="none" stroke="#333" stroke-width="1.3"/></svg>
<svg style="left:890px;top:137px" width="24" height="22" viewBox="0 0 24 22"><path d="M23 2 L20 4 L17 2 L13 7 L17 11 M23 12 L20 14 L17 12 L13 16 M23 20 L20 18 L17 20 L13 16" fill="none" stroke="#333" stroke-width="1.3"/><path d="M12 11 L8 7 M12 11 L8 15 M10 11 H1 M6 9 L8 11 L6 13 M3 9 L5 11 L3 13" stroke="#3a6af0" stroke-width="1.5" fill="none"/></svg>
<svg style="left:921px;top:148px" width="7" height="5" viewBox="0 0 7 5"><path d="M0.5 0.5 L3.5 4 L6.5 0.5" fill="none" stroke="#333" stroke-width="1.3"/></svg>
<svg style="left:936px;top:137px" width="26" height="24" viewBox="0 0 26 24"><path d="M1 2 H6 M1 11 H6 M1 20 H6 M9 2 H11 M9 20 H11" stroke="#333" stroke-width="1.6" stroke-dasharray="1.6 1.6" fill="none"/><path d="M13 3 L21 11 L13 19 L5 11 Z" fill="#60e060" stroke="#222" stroke-width="1.3"/><path d="M24 9 L26 11 L24 13 L22 11 Z" fill="none" stroke="#2a40f0"/></svg>
<div style="left:972px;top:139px;width:2px;height:24px;background-image:linear-gradient(#333 50%,transparent 50%);background-size:2px 4px"></div>
<div class="t" style="left:990px;top:139.975px;font-size:16.5px;color:#888">Search:</div>
<div style="left:1053px;top:137px;width:173px;height:28px;background:#f0f0f0;border-top:2px solid #a0a0a0;border-left:2px solid #a0a0a0;border-right:1px solid #f8f8f8;border-bottom:1px solid #f8f8f8"></div>
<div style="left:1230px;top:137px;width:26px;height:27px;background:#f0f0f0;border-top:1px solid #fff;border-left:1px solid #fff;border-right:2px solid #8a8a8a;border-bottom:2px solid #8a8a8a"></div>
<svg style="left:1235px;top:147px" width="16" height="8" viewBox="0 0 16 8"><path d="M1 1 H15 L8 8 Z" fill="#555"/></svg>
<svg style="left:1263px;top:138px" width="26" height="25" viewBox="0 0 26 25"><path d="M5 2 H10 V8 H14 V2 H19 L22 16 H13 V11 H11 V16 H2 Z" fill="#999" opacity="0.8"/><path d="M2 21 H12 M4 19 L2 21 L4 23" stroke="#3a70f0" stroke-width="1.8" fill="none"/></svg>
<svg style="left:1292px;top:138px" width="26" height="25" viewBox="0 0 26 25"><path d="M5 2 H10 V8 H14 V2 H19 L22 16 H13 V11 H11 V16 H2 Z" fill="#999" opacity="0.8"/><path d="M13 21 H24 M22 19 L24 21 L22 23" stroke="#3a70f0" stroke-width="1.8" fill="none"/></svg>
<svg style="left:1329px;top:139px" width="26" height="24" viewBox="0 0 26 24"><path d="M3 2 H12 V10 H20 L14 16" fill="#aaa" opacity="0.7"/><path d="M8 22 L22 8 L25 11 L11 25 Z" fill="#b8d0f0"/></svg>
<svg style="left:1395px;top:137px" width="24" height="24" viewBox="0 0 24 24"><circle cx="9" cy="9" r="7.5" fill="#fff" stroke="#111" stroke-width="2"/><path d="M5 9 H13 M9 5 V13" stroke="#111" stroke-width="2.6"/><path d="M14 14 L22 22" stroke="#3a50e0" stroke-width="3.5" stroke-linecap="round"/></svg>
<svg style="left:1428px;top:137px" width="24" height="24" viewBox="0 0 24 24"><circle cx="9" cy="9" r="7.5" fill="#fff" stroke="#111" stroke-width="2"/><path d="M5 9 H13" stroke="#111" stroke-width="2.6"/><path d="M14 14 L22 22" stroke="#3a50e0" stroke-width="3.5" stroke-linecap="round"/></svg>
<svg style="left:1461px;top:137px" width="24" height="24" viewBox="0 0 24 24"><circle cx="9" cy="9" r="8" fill="#0a4a90" stroke="#111" stroke-width="1.2"/><path d="M14 14 L22 22" stroke="#3a50e0" stroke-width="3.5" stroke-linecap="round"/></svg>
<svg style="left:1492px;top:135px" width="26" height="28" viewBox="0 0 26 28"><path d="M7 3 V20" stroke="#f0c800" stroke-width="2.5"/><rect x="1" y="20" width="14" height="6" fill="none" stroke="#f0c800" stroke-width="2.5"/><circle cx="18" cy="7" r="5" fill="#c0c0c0" stroke="#222"/><path d="M21 11 L25 15" stroke="#3a50e0" stroke-width="2"/></svg>
<svg style="left:1526px;top:135px" width="26" height="28" viewBox="0 0 26 28"><path d="M5 9 V20 M15 9 V20" stroke="#f0c800" stroke-width="2.5"/><rect x="1" y="20" width="8" height="6" fill="none" stroke="#f0c800" stroke-width="2.2"/><rect x="12" y="20" width="9" height="6" fill="none" stroke="#f0c800" stroke-width="2.2"/><circle cx="18" cy="6" r="4.5" fill="#c0c0c0" stroke="#222"/><path d="M20 10 L24 14" stroke="#3a50e0" stroke-width="2"/></svg>
<svg style="left:1559px;top:135px" width="26" height="26" viewBox="0 0 26 26"><path d="M1 10 V2 H14" stroke="#3a50c0" stroke-width="1.6" stroke-dasharray="1.6 1.6" fill="none"/><path d="M1 12 V20 H8" stroke="#3a50c0" stroke-width="1.6" stroke-dasharray="1.6 1.6" fill="none"/><path d="M9 6 L19 16" stroke="#333" stroke-dasharray="1.5 1.5"/><circle cx="17" cy="16" r="5" fill="#d0d0d0" stroke="#333"/><path d="M20 20 L25 25" stroke="#3a50e0" stroke-width="2"/></svg>
<div style="left:1619px;top:137px;width:29px;height:30px;background:#fff;border-top:2px solid #a0a0a0;border-left:2px solid #a0a0a0;border-right:1px solid #f8f8f8;border-bottom:1px solid #f8f8f8"></div>
<svg style="left:1622px;top:144px" width="23" height="20" viewBox="0 0 23 20"><path d="M11 1 V18 M1 18 H22" stroke="#1a9a40" stroke-width="1.6"/></svg>
<div style="left:1658px;top:137px;width:30px;height:30px;background:#f0f0f0;border-top:1px solid #fff;border-left:1px solid #fff;border-right:2px solid #8a8a8a;border-bottom:2px solid #8a8a8a"></div>
<svg style="left:1661px;top:142px" width="24" height="22" viewBox="0 0 24 22"><path d="M1 19 H22" stroke="#1a9a40" stroke-width="1.6"/><rect x="7" y="2" width="10" height="17" fill="#1a2a90" stroke="#3a6af0" stroke-width="1.5"/><path d="M10 4 V17 H14 V4" stroke="#1a9a40" stroke-width="1" fill="none"/></svg>
<div style="left:1697px;top:137px;width:30px;height:30px;background:#f0f0f0;border-top:1px solid #fff;border-left:1px solid #fff;border-right:2px solid #8a8a8a;border-bottom:2px solid #8a8a8a"></div>
<svg style="left:1700px;top:142px" width="24" height="22" viewBox="0 0 24 22"><rect x="1" y="2" width="22" height="18" fill="#0a5a10" stroke="#1a9a40" stroke-width="1.5"/><path d="M5 19 V4 H9 V19 H13 V4 H17 V19" fill="none" stroke="#2adf4a" stroke-width="1.3"/></svg>
<div style="left:1740px;top:140px;width:2px;height:24px;background-image:linear-gradient(#333 50%,transparent 50%);background-size:2px 4px"></div>
<svg style="left:1751px;top:139px" width="25" height="23" viewBox="0 0 25 23"><rect x="1" y="1" width="23" height="21" fill="#5a6aa0" opacity="0.85"/><path d="M12 1 V22" stroke="#2a9a40" stroke-dasharray="1.5 1.5"/></svg>
<svg style="left:1786px;top:139px" width="24" height="23" viewBox="0 0 24 23"><path d="M1 22 H6 V2 H23" stroke="#2a9a40" stroke-width="1.6" stroke-dasharray="1.6 1.6" fill="none"/><rect x="6" y="2" width="4" height="20" fill="#5a6aa0" opacity="0.8"/><path d="M6 2 V22" stroke="#e0e020" stroke-dasharray="1.5 1.5"/></svg>
<svg style="left:1819px;top:139px" width="24" height="23" viewBox="0 0 24 23"><path d="M1 22 H9 V2 H23" stroke="#2a9a40" stroke-width="1.6" stroke-dasharray="1.6 1.6" fill="none"/></svg>
<svg style="left:1852px;top:139px" width="24" height="23" viewBox="0 0 24 23"><path d="M1 22 H9 V2 H23" stroke="#2a9a40" stroke-width="1.6" stroke-dasharray="1.6 1.6" fill="none"/><path d="M9 2 V22" stroke="#e0e020" stroke-width="1.2" stroke-dasharray="1.5 1.5"/></svg>
<div style="left:2px;top:177px;width:3534px;height:1087px;background:#c9c9c9"></div>
<div style="left:2px;top:177px;width:699px;height:681px;background:#f0f0f0;border-top:1px solid #a0a0a0;border-left:1px solid #a0a0a0;border-right:1px solid #fff;border-bottom:1px solid #fff"></div>
<div style="left:3px;top:178px;width:697px;height:679px;border-top:1px solid #fff;border-left:1px solid #fff;border-right:1px solid #a0a0a0;border-bottom:1px solid #a0a0a0"></div>
<svg style="left:7px;top:181px;" width="24" height="23" viewBox="0 0 24 23"><g fill="#1a3fbf"><circle cx="3" cy="2" r="1"/><circle cx="7" cy="1.5" r="1"/><circle cx="11" cy="2" r="1"/><circle cx="15" cy="1.5" r="1"/><circle cx="19" cy="2" r="1"/><circle cx="5" cy="5" r="1"/><circle cx="13" cy="5" r="1"/><circle cx="17" cy="5" r="1"/></g><path d="M7 6 V12 M4 9.5 L7 13 L10 9.5 M15 6 V12 M12 9.5 L15 13 L18 9.5" stroke="#0a2aa8" stroke-width="2" fill="none"/><path d="M1 9 V21.5 H22 V9" fill="none" stroke="#111" stroke-width="1.6"/><g fill="#333"><circle cx="5" cy="16" r=".8"/><circle cx="8" cy="16" r=".8"/><circle cx="11" cy="16" r=".8"/><circle cx="14" cy="16" r=".8"/><circle cx="17" cy="16" r=".8"/><circle cx="5" cy="19" r=".8"/><circle cx="8" cy="19" r=".8"/><circle cx="11" cy="19" r=".8"/><circle cx="14" cy="19" r=".8"/><circle cx="17" cy="19" r=".8"/></g></svg>
<div class="t" style="left:35px;top:184.73px;font-size:16.2px;color:#000;font-family:'Liberation Sans', sans-serif;">Project - C:/Users/ccoggshall/Desktop/e155lab2/lab2_cc/lab2_cc_sim1</div>
<div style="left:549px;top:188px;width:72px;height:2px;background:#fcfcfc"></div>
<div style="left:549px;top:190px;width:72px;height:2px;background:#808080"></div>
<div style="left:549px;top:195.5px;width:72px;height:2px;background:#fcfcfc"></div>
<div style="left:549px;top:197.5px;width:72px;height:2px;background:#808080"></div>
<div style="left:619px;top:188px;width:2px;height:11.5px;background:#808080"></div>
<div style="left:568.0px;top:187px;width:34px;height:14px;background:#f0f0f0"></div>
<div style="left:571.0px;top:188px;width:28px;height:12px;background-image:radial-gradient(circle,#3a3a3a 0.9px,transparent 1.1px);background-size:4.6px 4px;background-position:0 0"></div>
<div style="left:674px;top:183px;width:20px;height:19px;background:#f0f0f0;border-top:1px solid #fff;border-left:1px solid #fff;border-right:2px solid #9a9a9a;border-bottom:2px solid #9a9a9a"></div>
<svg style="left:678px;top:186px;" width="12" height="12" viewBox="0 0 12 12"><path d="M1.5 1.5 L10.5 10.5 M10.5 1.5 L1.5 10.5" stroke="#000" stroke-width="1.9"/></svg>
<div style="left:650px;top:183px;width:20px;height:19px;background:#f0f0f0;border-top:1px solid #fff;border-left:1px solid #fff;border-right:2px solid #9a9a9a;border-bottom:2px solid #9a9a9a"></div>
<svg style="left:653px;top:186px;" width="14" height="14" viewBox="0 0 14 14"><rect x="2" y="7" width="5.5" height="5.5" fill="none" stroke="#000" stroke-width="1.6"/><path d="M5 9.5 L11.5 3 M7.5 2.5 H12 V7" fill="none" stroke="#000" stroke-width="2"/></svg>
<div style="left:626px;top:183px;width:20px;height:19px;background:#f0f0f0;border-top:1px solid #fff;border-left:1px solid #fff;border-right:2px solid #9a9a9a;border-bottom:2px solid #9a9a9a"></div>
<svg style="left:629px;top:186px;" width="13" height="13" viewBox="0 0 13 13"><path d="M6.5 1.5 V11.5 M1.5 6.5 H11.5" stroke="#000" stroke-width="2.5"/></svg>
<div style="left:4px;top:208px;width:693px;height:26px;background:#f0f0f0;border-top:1px solid #fff;border-left:1px solid #fff;border-bottom:2px solid #a0a0a0;border-right:1px solid #a0a0a0"></div>
<div style="left:22px;top:209px;width:2px;height:23px;border-left:1px solid #a0a0a0;border-right:1px solid #fff"></div>
<div style="left:226px;top:209px;width:2px;height:23px;border-left:1px solid #a0a0a0;border-right:1px solid #fff"></div>
<div style="left:272px;top:209px;width:2px;height:23px;border-left:1px solid #a0a0a0;border-right:1px solid #fff"></div>
<div style="left:329px;top:209px;width:2px;height:23px;border-left:1px solid #a0a0a0;border-right:1px solid #fff"></div>
<div style="left:370px;top:209px;width:2px;height:23px;border-left:1px solid #a0a0a0;border-right:1px solid #fff"></div>
<div style="left:560px;top:209px;width:2px;height:23px;border-left:1px solid #a0a0a0;border-right:1px solid #fff"></div>
<div class="t" style="left:26px;top:213.73px;font-size:16.2px;color:#000;font-family:'Liberation Sans', sans-serif;">Name</div>
<div class="t" style="left:229px;top:213.73px;font-size:16.2px;color:#000;font-family:'Liberation Sans', sans-serif;">Status</div>
<div class="t" style="left:275px;top:213.73px;font-size:16.2px;color:#000;font-family:'Liberation Sans', sans-serif;">Type</div>
<div class="t" style="left:333px;top:213.73px;font-size:16.2px;color:#000;font-family:'Liberation Sans', sans-serif;">Order</div>
<div class="t" style="left:374px;top:213.73px;font-size:16.2px;color:#000;font-family:'Liberation Sans', sans-serif;">Modified</div>
<svg style="left:9px;top:215px;" width="13" height="12" viewBox="0 0 13 12"><path d="M0.5 0.5 H12.5 L6.5 10 Z" fill="#333"/><path d="M3 1.5 H10 L6.5 7 Z" fill="#777"/></svg>
<div style="left:4px;top:234px;width:694px;height:585px;background:#fff"></div>
<div style="left:5px;top:234px;width:1px;height:585px;background:#a0a0a0"></div>
<svg style="left:36px;top:238.5px;" width="25" height="24" viewBox="0 0 25 24"><rect x="0.5" y="0" width="3" height="24" fill="#050505"/><rect x="4.2" y="1.3" width="15.5" height="22" fill="#f8f8f8" stroke="#8a8684" stroke-width="1.4"/><rect x="20" y="0" width="3.8" height="24" fill="#050505"/><path d="M16.5 1.5 V5 H20" fill="none" stroke="#8a8684" stroke-width="1.2"/></svg>
<svg style="left:229px;top:240.0px;" width="26" height="23" viewBox="0 0 26 23"><path d="M1.5 11.5 L5.5 9 L8.5 13 L21 1.5 L24.5 3.5 L9 20.5 Z" fill="#000" transform="translate(0.9 1)"/><path d="M0.5 11 L4.5 8.5 L7.5 12.5 L20.5 0.8 L23.5 3 L8 19.5 Z" fill="#089008"/></svg>
<div class="t" style="left:67px;top:240.78px;font-size:16.5px;color:#000;font-family:'Liberation Sans', sans-serif;">lab2_testbench.sv</div>
<div class="t" style="left:276px;top:240.78px;font-size:16.5px;color:#000;font-family:'Liberation Sans', sans-serif;">Syst...</div>
<div class="t" style="left:334px;top:240.78px;font-size:16.5px;color:#000;font-family:'Liberation Sans', sans-serif;">1</div>
<div class="t" style="left:375px;top:240.78px;font-size:16.5px;color:#000;font-family:'Liberation Sans', sans-serif;">09/08/2025 10:51:31 ...</div>
<svg style="left:36px;top:262.4px;" width="25" height="24" viewBox="0 0 25 24"><rect x="0.5" y="0" width="3" height="24" fill="#050505"/><rect x="4.2" y="1.3" width="15.5" height="22" fill="#f8f8f8" stroke="#8a8684" stroke-width="1.4"/><rect x="20" y="0" width="3.8" height="24" fill="#050505"/><path d="M16.5 1.5 V5 H20" fill="none" stroke="#8a8684" stroke-width="1.2"/></svg>
<svg style="left:229px;top:263.9px;" width="26" height="23" viewBox="0 0 26 23"><path d="M1.5 11.5 L5.5 9 L8.5 13 L21 1.5 L24.5 3.5 L9 20.5 Z" fill="#000" transform="translate(0.9 1)"/><path d="M0.5 11 L4.5 8.5 L7.5 12.5 L20.5 0.8 L23.5 3 L8 19.5 Z" fill="#089008"/></svg>
<div class="t" style="left:67px;top:264.68px;font-size:16.5px;color:#000;font-family:'Liberation Sans', sans-serif;">multiplex.sv</div>
<div class="t" style="left:276px;top:264.68px;font-size:16.5px;color:#000;font-family:'Liberation Sans', sans-serif;">Syst...</div>
<div class="t" style="left:334px;top:264.68px;font-size:16.5px;color:#000;font-family:'Liberation Sans', sans-serif;">3</div>
<div class="t" style="left:375px;top:264.68px;font-size:16.5px;color:#000;font-family:'Liberation Sans', sans-serif;">09/07/2025 09:41:39 ...</div>
<svg style="left:36px;top:286.3px;" width="25" height="24" viewBox="0 0 25 24"><rect x="0.5" y="0" width="3" height="24" fill="#050505"/><rect x="4.2" y="1.3" width="15.5" height="22" fill="#f8f8f8" stroke="#8a8684" stroke-width="1.4"/><rect x="20" y="0" width="3.8" height="24" fill="#050505"/><path d="M16.5 1.5 V5 H20" fill="none" stroke="#8a8684" stroke-width="1.2"/></svg>
<svg style="left:229px;top:287.8px;" width="26" height="23" viewBox="0 0 26 23"><path d="M1.5 11.5 L5.5 9 L8.5 13 L21 1.5 L24.5 3.5 L9 20.5 Z" fill="#000" transform="translate(0.9 1)"/><path d="M0.5 11 L4.5 8.5 L7.5 12.5 L20.5 0.8 L23.5 3 L8 19.5 Z" fill="#089008"/></svg>
<div class="t" style="left:67px;top:288.58px;font-size:16.5px;color:#000;font-family:'Liberation Sans', sans-serif;">seven_seg_display...</div>
<div class="t" style="left:276px;top:288.58px;font-size:16.5px;color:#000;font-family:'Liberation Sans', sans-serif;">Syst...</div>
<div class="t" style="left:334px;top:288.58px;font-size:16.5px;color:#000;font-family:'Liberation Sans', sans-serif;">4</div>
<div class="t" style="left:375px;top:288.58px;font-size:16.5px;color:#000;font-family:'Liberation Sans', sans-serif;">09/07/2025 10:00:58 ...</div>
<svg style="left:36px;top:310.2px;" width="25" height="24" viewBox="0 0 25 24"><rect x="0.5" y="0" width="3" height="24" fill="#050505"/><rect x="4.2" y="1.3" width="15.5" height="22" fill="#f8f8f8" stroke="#8a8684" stroke-width="1.4"/><rect x="20" y="0" width="3.8" height="24" fill="#050505"/><path d="M16.5 1.5 V5 H20" fill="none" stroke="#8a8684" stroke-width="1.2"/></svg>
<svg style="left:229px;top:311.7px;" width="26" height="23" viewBox="0 0 26 23"><path d="M1.5 11.5 L5.5 9 L8.5 13 L21 1.5 L24.5 3.5 L9 20.5 Z" fill="#000" transform="translate(0.9 1)"/><path d="M0.5 11 L4.5 8.5 L7.5 12.5 L20.5 0.8 L23.5 3 L8 19.5 Z" fill="#089008"/></svg>
<div class="t" style="left:67px;top:312.48px;font-size:16.5px;color:#000;font-family:'Liberation Sans', sans-serif;">lab2_cc.sv</div>
<div class="t" style="left:276px;top:312.48px;font-size:16.5px;color:#000;font-family:'Liberation Sans', sans-serif;">Syst...</div>
<div class="t" style="left:334px;top:312.48px;font-size:16.5px;color:#000;font-family:'Liberation Sans', sans-serif;">0</div>
<div class="t" style="left:375px;top:312.48px;font-size:16.5px;color:#000;font-family:'Liberation Sans', sans-serif;">09/08/2025 10:11:23 ...</div>
<svg style="left:36px;top:334.1px;" width="25" height="24" viewBox="0 0 25 24"><rect x="0.5" y="0" width="3" height="24" fill="#050505"/><rect x="4.2" y="1.3" width="15.5" height="22" fill="#f8f8f8" stroke="#8a8684" stroke-width="1.4"/><rect x="20" y="0" width="3.8" height="24" fill="#050505"/><path d="M16.5 1.5 V5 H20" fill="none" stroke="#8a8684" stroke-width="1.2"/></svg>
<svg style="left:229px;top:335.6px;" width="26" height="23" viewBox="0 0 26 23"><path d="M1.5 11.5 L5.5 9 L8.5 13 L21 1.5 L24.5 3.5 L9 20.5 Z" fill="#000" transform="translate(0.9 1)"/><path d="M0.5 11 L4.5 8.5 L7.5 12.5 L20.5 0.8 L23.5 3 L8 19.5 Z" fill="#089008"/></svg>
<div class="t" style="left:67px;top:336.38px;font-size:16.5px;color:#000;font-family:'Liberation Sans', sans-serif;">multi_testbench.sv</div>
<div class="t" style="left:276px;top:336.38px;font-size:16.5px;color:#000;font-family:'Liberation Sans', sans-serif;">Syst...</div>
<div class="t" style="left:334px;top:336.38px;font-size:16.5px;color:#000;font-family:'Liberation Sans', sans-serif;">2</div>
<div class="t" style="left:375px;top:336.38px;font-size:16.5px;color:#000;font-family:'Liberation Sans', sans-serif;">09/08/2025 09:20:46 ...</div>
<svg style="left:36px;top:358.0px;" width="25" height="24" viewBox="0 0 25 24"><rect x="0.5" y="0" width="3" height="24" fill="#050505"/><rect x="4.2" y="1.3" width="15.5" height="22" fill="#f8f8f8" stroke="#8a8684" stroke-width="1.4"/><rect x="20" y="0" width="3.8" height="24" fill="#050505"/><path d="M16.5 1.5 V5 H20" fill="none" stroke="#8a8684" stroke-width="1.2"/></svg>
<svg style="left:229px;top:359.5px;" width="26" height="23" viewBox="0 0 26 23"><path d="M1.5 11.5 L5.5 9 L8.5 13 L21 1.5 L24.5 3.5 L9 20.5 Z" fill="#000" transform="translate(0.9 1)"/><path d="M0.5 11 L4.5 8.5 L7.5 12.5 L20.5 0.8 L23.5 3 L8 19.5 Z" fill="#089008"/></svg>
<div class="t" style="left:67px;top:360.28px;font-size:16.5px;color:#000;font-family:'Liberation Sans', sans-serif;">seven_seg_testbe...</div>
<div class="t" style="left:276px;top:360.28px;font-size:16.5px;color:#000;font-family:'Liberation Sans', sans-serif;">Syst...</div>
<div class="t" style="left:334px;top:360.28px;font-size:16.5px;color:#000;font-family:'Liberation Sans', sans-serif;">5</div>
<div class="t" style="left:375px;top:360.28px;font-size:16.5px;color:#000;font-family:'Liberation Sans', sans-serif;">09/08/2025 08:59:58 ...</div>
<div style="left:4px;top:819px;width:693px;height:38px;background:#f0f0f0"></div>
<div style="left:4px;top:822px;width:670px;height:2px;background:#1e1e1e"></div>
<div style="left:4px;top:823px;width:113px;height:32px;background:#cdcdcd;border:2px solid #2a2a2a;border-top:0;border-radius:0 0 6px 6px"></div>
<div class="t" style="left:39px;top:829.98px;font-size:16.5px;color:#000;font-family:'Liberation Sans', sans-serif;">Library</div>
<svg style="left:99px;top:832px;" width="13" height="13" viewBox="0 0 13 13"><path d="M2 2 L11 11 M11 2 L2 11" stroke="#b4b4b4" stroke-width="2.4"/></svg>
<div style="left:119px;top:823px;width:116px;height:32px;background:#f0f0f0;border:2px solid #2a2a2a;border-top:0;border-radius:0 0 6px 6px"></div>
<div class="t" style="left:153px;top:829.98px;font-size:16.5px;color:#000;font-family:'Liberation Sans', sans-serif;">Project</div>
<svg style="left:216px;top:832px;" width="13" height="13" viewBox="0 0 13 13"><path d="M2 2 L11 11 M11 2 L2 11" stroke="#b4b4b4" stroke-width="2.4"/></svg>
<div style="left:236px;top:823px;width:88px;height:32px;background:#cdcdcd;border:2px solid #2a2a2a;border-top:0;border-radius:0 0 6px 6px"></div>
<div class="t" style="left:272px;top:829.98px;font-size:16.5px;color:#000;font-family:'Liberation Sans', sans-serif;">sim</div>
<svg style="left:304px;top:832px;" width="13" height="13" viewBox="0 0 13 13"><path d="M2 2 L11 11 M11 2 L2 11" stroke="#b4b4b4" stroke-width="2.4"/></svg>
<svg style="left:11px;top:823px;" width="26" height="28" viewBox="0 0 26 28"><path d="M2 26 L6 22 V6 H20 V22 L24 26 Z" fill="#111"/><rect x="7" y="8" width="3" height="15" fill="#00c89a"/><rect x="10.5" y="3" width="3" height="20" fill="#d0006a"/><rect x="14" y="8" width="3" height="15" fill="#2a8aff"/><rect x="17.5" y="6" width="3" height="17" fill="#e8e000"/></svg>
<svg style="left:124px;top:825px;" width="24" height="24" viewBox="0 0 24 24"><g fill="#1a3fbf"><circle cx="3" cy="2" r="1"/><circle cx="7" cy="1.5" r="1"/><circle cx="11" cy="2" r="1"/><circle cx="15" cy="1.5" r="1"/><circle cx="19" cy="2" r="1"/></g><path d="M7 5 V11 M4 8.5 L7 12 L10 8.5 M15 5 V11 M12 8.5 L15 12 L18 8.5" stroke="#0a2aa8" stroke-width="2" fill="none"/><path d="M1 8 V21 H22 V8" fill="none" stroke="#111" stroke-width="1.6"/><g fill="#333"><circle cx="5" cy="15" r=".8"/><circle cx="8" cy="15" r=".8"/><circle cx="11" cy="15" r=".8"/><circle cx="14" cy="15" r=".8"/><circle cx="17" cy="15" r=".8"/><circle cx="5" cy="18" r=".8"/><circle cx="8" cy="18" r=".8"/><circle cx="11" cy="18" r=".8"/><circle cx="14" cy="18" r=".8"/><circle cx="17" cy="18" r=".8"/></g></svg>
<svg style="left:242px;top:824px;" width="28" height="28" viewBox="0 0 28 28"><path d="M8 3 H22 V18 H8 Z" fill="#f4f4f4" stroke="#222" stroke-width="1.5"/><path d="M11 7 H19 M11 10 H19 M11 13 H17" stroke="#444" stroke-width="1"/><path d="M3 22 L10 14 L18 22" fill="none" stroke="#222" stroke-width="2"/><circle cx="5" cy="23" r="3.2" fill="#d01020"/><circle cx="20" cy="23" r="3.2" fill="#d01020"/></svg>
<div style="left:668px;top:825px;width:14px;height:22px;background:#f0f0f0;border-top:1px solid #fff;border-left:1px solid #fff;border-right:1px solid #8a8a8a;border-bottom:1px solid #8a8a8a"></div>
<div style="left:684px;top:825px;width:14px;height:22px;background:#f0f0f0;border-top:1px solid #fff;border-left:1px solid #fff;border-right:1px solid #8a8a8a;border-bottom:1px solid #8a8a8a"></div>
<svg style="left:671px;top:831px;" width="8" height="10" viewBox="0 0 8 10"><path d="M6 1 L2 5 L6 9" fill="none" stroke="#555" stroke-width="1.2"/></svg>
<svg style="left:687px;top:831px;" width="8" height="10" viewBox="0 0 8 10"><path d="M2 1 L6 5 L2 9" fill="none" stroke="#555" stroke-width="1.2"/></svg>
<div style="left:710px;top:177px;width:699px;height:332px;background:#f0f0f0;border-top:1px solid #a0a0a0;border-left:1px solid #a0a0a0;border-right:1px solid #fff;border-bottom:1px solid #fff"></div>
<div style="left:711px;top:178px;width:697px;height:330px;border-top:1px solid #fff;border-left:1px solid #fff;border-right:1px solid #a0a0a0;border-bottom:1px solid #a0a0a0"></div>
<svg style="left:713px;top:180px;" width="27" height="27" viewBox="0 0 27 27"><path d="M1.5 9.5 L8.5 2.5 L13 7 L6 14 Z" fill="#c030e0" stroke="#8010a0" stroke-width="0.8"/><rect x="13" y="9" width="12" height="12" fill="#18b040" stroke="#108030" stroke-width="0.8"/><circle cx="15" cy="9.5" r="5.5" fill="#00e8f8" stroke="#5090a0" stroke-width="0.8"/><path d="M0.5 17 L8.5 9 L16.5 17 L8.5 25 Z" fill="#0a55e8"/></svg>
<div class="t" style="left:743.5px;top:184.73px;font-size:16.2px;color:#000;font-family:'Liberation Sans', sans-serif;">Objects</div>
<div style="left:808px;top:188px;width:520px;height:2px;background:#fcfcfc"></div>
<div style="left:808px;top:190px;width:520px;height:2px;background:#808080"></div>
<div style="left:808px;top:195.5px;width:520px;height:2px;background:#fcfcfc"></div>
<div style="left:808px;top:197.5px;width:520px;height:2px;background:#808080"></div>
<div style="left:1326px;top:188px;width:2px;height:11.5px;background:#808080"></div>
<div style="left:1051.0px;top:187px;width:34px;height:14px;background:#f0f0f0"></div>
<div style="left:1054.0px;top:188px;width:28px;height:12px;background-image:radial-gradient(circle,#3a3a3a 0.9px,transparent 1.1px);background-size:4.6px 4px;background-position:0 0"></div>
<div style="left:1382px;top:183px;width:20px;height:19px;background:#f0f0f0;border-top:1px solid #fff;border-left:1px solid #fff;border-right:2px solid #9a9a9a;border-bottom:2px solid #9a9a9a"></div>
<svg style="left:1386px;top:186px;" width="12" height="12" viewBox="0 0 12 12"><path d="M1.5 1.5 L10.5 10.5 M10.5 1.5 L1.5 10.5" stroke="#000" stroke-width="1.9"/></svg>
<div style="left:1358px;top:183px;width:20px;height:19px;background:#f0f0f0;border-top:1px solid #fff;border-left:1px solid #fff;border-right:2px solid #9a9a9a;border-bottom:2px solid #9a9a9a"></div>
<svg style="left:1361px;top:186px;" width="14" height="14" viewBox="0 0 14 14"><rect x="2" y="7" width="5.5" height="5.5" fill="none" stroke="#000" stroke-width="1.6"/><path d="M5 9.5 L11.5 3 M7.5 2.5 H12 V7" fill="none" stroke="#000" stroke-width="2"/></svg>
<div style="left:1334px;top:183px;width:20px;height:19px;background:#f0f0f0;border-top:1px solid #fff;border-left:1px solid #fff;border-right:2px solid #9a9a9a;border-bottom:2px solid #9a9a9a"></div>
<svg style="left:1337px;top:186px;" width="13" height="13" viewBox="0 0 13 13"><path d="M6.5 1.5 V11.5 M1.5 6.5 H11.5" stroke="#000" stroke-width="2.5"/></svg>
<div style="left:713px;top:207px;width:691px;height:26px;background:#f0f0f0;border-top:1px solid #fff;border-left:1px solid #fff;border-bottom:2px solid #a0a0a0;border-right:1px solid #a0a0a0"></div>
<div style="left:732px;top:208px;width:2px;height:23px;border-left:1px solid #a0a0a0;border-right:1px solid #fff"></div>
<div style="left:933px;top:208px;width:2px;height:23px;border-left:1px solid #a0a0a0;border-right:1px solid #fff"></div>
<div style="left:999px;top:208px;width:2px;height:23px;border-left:1px solid #a0a0a0;border-right:1px solid #fff"></div>
<div style="left:1057px;top:208px;width:2px;height:23px;border-left:1px solid #a0a0a0;border-right:1px solid #fff"></div>
<div style="left:1122px;top:208px;width:2px;height:23px;border-left:1px solid #a0a0a0;border-right:1px solid #fff"></div>
<div class="t" style="left:735px;top:212.73px;font-size:16.2px;color:#000;font-family:'Liberation Sans', sans-serif;">Name</div>
<div class="t" style="left:938px;top:212.73px;font-size:16.2px;color:#000;font-family:'Liberation Sans', sans-serif;">Value</div>
<div class="t" style="left:1003px;top:212.73px;font-size:16.2px;color:#000;font-family:'Liberation Sans', sans-serif;">Kind</div>
<div class="t" style="left:1060px;top:212.73px;font-size:16.2px;color:#000;font-family:'Liberation Sans', sans-serif;">Mode</div>
<svg style="left:718px;top:214px;" width="13" height="12" viewBox="0 0 13 12"><path d="M0.5 0.5 H12.5 L6.5 10 Z" fill="#333"/><path d="M3 1.5 H10 L6.5 7 Z" fill="#777"/></svg>
<svg style="left:918px;top:214px;" width="13" height="12" viewBox="0 0 13 12"><path d="M1 1 H12 L6.5 10 Z" fill="none" stroke="#777" stroke-width="1.2"/></svg>
<div style="left:1158px;top:210px;width:230px;height:22px;background:#e4eee4;border-top:1px solid #fff;border-left:1px solid #fff;border-right:1px solid #a0a0a0;border-bottom:1px solid #a0a0a0"></div>
<div style="left:1183px;top:211px;width:1px;height:20px;background:#b0b0b0"></div>
<div style="left:1360px;top:211px;width:1px;height:20px;background:#b0b0b0"></div>
<svg style="left:1159px;top:211px;" width="24" height="20" viewBox="0 0 24 20"><path d="M2 4 H7 V17 H16" fill="none" stroke="#111" stroke-width="1.6"/><path d="M20 9 H12 M12 9 L15 6 M12 9 L15 12" fill="none" stroke="#888" stroke-width="2.2"/></svg>
<svg style="left:1361px;top:211px;" width="26" height="20" viewBox="0 0 26 20"><path d="M22 4 H13 V17 H9" fill="none" stroke="#111" stroke-width="1.6"/><path d="M4 9 H12 M12 9 L9 6 M12 9 L9 12" fill="none" stroke="#888" stroke-width="2.2"/></svg>
<svg style="left:1191px;top:214px;" width="12" height="12" viewBox="0 0 12 12"><circle cx="6" cy="6" r="5.3" fill="#00cc00" stroke="#111" stroke-width="0.9"/></svg>
<div class="t" style="left:1209.5px;top:214.2px;font-size:17.5px;color:#222;font-family:'Liberation Mono', monospace;-webkit-text-stroke:0.15px #222">29092080000 ps</div>
<svg style="left:1392px;top:213px;" width="10" height="16" viewBox="0 0 10 16"><path d="M1 1 L9 8 L1 15 Z" fill="#111"/></svg>
<div style="left:714px;top:233px;width:690px;height:271px;background:#525a8b"></div>
<div style="left:722px;top:243px;width:15px;height:15px;background:linear-gradient(#ffffff,#dfe4f0);border-radius:2px;border-right:1px solid #8890a0;border-bottom:1px solid #8890a0"></div>
<svg style="left:722px;top:243px;" width="15" height="15" viewBox="0 0 15 15"><path d="M3.5 8 H11.5" stroke="#000" stroke-width="1.7"/><path d="M7.5 4 V12" stroke="#000" stroke-width="1.7"/></svg>
<div style="left:737px;top:250px;width:8px;height:1.5px;background:#9a9ab0"></div>
<svg style="left:745px;top:238px" width="22" height="22" viewBox="0 0 22 22"><path d="M11 0 L22 11 L11 22 L0 11 Z" fill="#1590d0"/><path d="M11 0 L11 5 L5 11 L0 11 Z" fill="#90e0fa"/><path d="M11 0 L22 11 L17 11 L11 5 Z" fill="#1aa2e2"/><path d="M0 11 L5 11 L11 17 L11 22 Z" fill="#1288c8"/><path d="M22 11 L11 22 L11 17 L17 11 Z" fill="#0a6ca8"/><path d="M11 5 L17 11 L11 17 L5 11 Z" fill="#00c4f4"/></svg>
<div class="t" style="left:773px;top:241.28px;font-size:16.5px;color:#fff;font-family:'Liberation Sans', sans-serif;">seg</div>
<div class="t" style="left:937px;top:241.28px;font-size:16.5px;color:#fff;font-family:'Liberation Sans', sans-serif;">7'h06</div>
<div class="t" style="left:1003px;top:241.28px;font-size:16.5px;color:#fff;font-family:'Liberation Sans', sans-serif;">Pack...</div>
<div class="t" style="left:1060px;top:241.28px;font-size:16.5px;color:#fff;font-family:'Liberation Sans', sans-serif;">Internal</div>
<div style="left:722px;top:267px;width:15px;height:15px;background:linear-gradient(#ffffff,#dfe4f0);border-radius:2px;border-right:1px solid #8890a0;border-bottom:1px solid #8890a0"></div>
<svg style="left:722px;top:267px;" width="15" height="15" viewBox="0 0 15 15"><path d="M3.5 8 H11.5" stroke="#000" stroke-width="1.7"/><path d="M7.5 4 V12" stroke="#000" stroke-width="1.7"/></svg>
<div style="left:737px;top:274px;width:8px;height:1.5px;background:#9a9ab0"></div>
<svg style="left:745px;top:262px" width="22" height="22" viewBox="0 0 22 22"><path d="M11 0 L22 11 L11 22 L0 11 Z" fill="#1590d0"/><path d="M11 0 L11 5 L5 11 L0 11 Z" fill="#90e0fa"/><path d="M11 0 L22 11 L17 11 L11 5 Z" fill="#1aa2e2"/><path d="M0 11 L5 11 L11 17 L11 22 Z" fill="#1288c8"/><path d="M22 11 L11 22 L11 17 L17 11 Z" fill="#0a6ca8"/><path d="M11 5 L17 11 L11 17 L5 11 Z" fill="#00c4f4"/></svg>
<div class="t" style="left:773px;top:265.28px;font-size:16.5px;color:#fff;font-family:'Liberation Sans', sans-serif;">scounttop</div>
<div class="t" style="left:937px;top:265.28px;font-size:16.5px;color:#fff;font-family:'Liberation Sans', sans-serif;">8'h91</div>
<div class="t" style="left:1003px;top:265.28px;font-size:16.5px;color:#fff;font-family:'Liberation Sans', sans-serif;">Pack...</div>
<div class="t" style="left:1060px;top:265.28px;font-size:16.5px;color:#fff;font-family:'Liberation Sans', sans-serif;">Internal</div>
<svg style="left:745px;top:286px" width="22" height="22" viewBox="0 0 22 22"><path d="M11 0 L22 11 L11 22 L0 11 Z" fill="#1590d0"/><path d="M11 0 L11 5 L5 11 L0 11 Z" fill="#90e0fa"/><path d="M11 0 L22 11 L17 11 L11 5 Z" fill="#1aa2e2"/><path d="M0 11 L5 11 L11 17 L11 22 Z" fill="#1288c8"/><path d="M22 11 L11 22 L11 17 L17 11 Z" fill="#0a6ca8"/><path d="M11 5 L17 11 L11 17 L5 11 Z" fill="#00c4f4"/></svg>
<div class="t" style="left:773px;top:289.28px;font-size:16.5px;color:#fff;font-family:'Liberation Sans', sans-serif;">reset</div>
<div class="t" style="left:937px;top:289.28px;font-size:16.5px;color:#fff;font-family:'Liberation Sans', sans-serif;">1'h1</div>
<div class="t" style="left:1003px;top:289.28px;font-size:16.5px;color:#fff;font-family:'Liberation Sans', sans-serif;">Regi...</div>
<div class="t" style="left:1060px;top:289.28px;font-size:16.5px;color:#fff;font-family:'Liberation Sans', sans-serif;">Internal</div>
<div style="left:722px;top:315px;width:15px;height:15px;background:linear-gradient(#ffffff,#dfe4f0);border-radius:2px;border-right:1px solid #8890a0;border-bottom:1px solid #8890a0"></div>
<svg style="left:722px;top:315px;" width="15" height="15" viewBox="0 0 15 15"><path d="M3.5 8 H11.5" stroke="#000" stroke-width="1.7"/><path d="M7.5 4 V12" stroke="#000" stroke-width="1.7"/></svg>
<div style="left:737px;top:322px;width:8px;height:1.5px;background:#9a9ab0"></div>
<svg style="left:745px;top:310px" width="22" height="22" viewBox="0 0 22 22"><path d="M11 0 L22 11 L11 22 L0 11 Z" fill="#1590d0"/><path d="M11 0 L11 5 L5 11 L0 11 Z" fill="#90e0fa"/><path d="M11 0 L22 11 L17 11 L11 5 Z" fill="#1aa2e2"/><path d="M0 11 L5 11 L11 17 L11 22 Z" fill="#1288c8"/><path d="M22 11 L11 22 L11 17 L17 11 Z" fill="#0a6ca8"/><path d="M11 5 L17 11 L11 17 L5 11 Z" fill="#00c4f4"/></svg>
<div class="t" style="left:773px;top:313.28px;font-size:16.5px;color:#fff;font-family:'Liberation Sans', sans-serif;">led</div>
<div class="t" style="left:937px;top:313.28px;font-size:16.5px;color:#fff;font-family:'Liberation Sans', sans-serif;">5'h0a</div>
<div class="t" style="left:1003px;top:313.28px;font-size:16.5px;color:#fff;font-family:'Liberation Sans', sans-serif;">Pack...</div>
<div class="t" style="left:1060px;top:313.28px;font-size:16.5px;color:#fff;font-family:'Liberation Sans', sans-serif;">Internal</div>
<div style="left:722px;top:339px;width:15px;height:15px;background:linear-gradient(#ffffff,#dfe4f0);border-radius:2px;border-right:1px solid #8890a0;border-bottom:1px solid #8890a0"></div>
<svg style="left:722px;top:339px;" width="15" height="15" viewBox="0 0 15 15"><path d="M3.5 8 H11.5" stroke="#000" stroke-width="1.7"/><path d="M7.5 4 V12" stroke="#000" stroke-width="1.7"/></svg>
<div style="left:737px;top:346px;width:8px;height:1.5px;background:#9a9ab0"></div>
<svg style="left:745px;top:334px" width="22" height="22" viewBox="0 0 22 22"><path d="M11 0 L22 11 L11 22 L0 11 Z" fill="#1590d0"/><path d="M11 0 L11 5 L5 11 L0 11 Z" fill="#90e0fa"/><path d="M11 0 L22 11 L17 11 L11 5 Z" fill="#1aa2e2"/><path d="M0 11 L5 11 L11 17 L11 22 Z" fill="#1288c8"/><path d="M22 11 L11 22 L11 17 L17 11 Z" fill="#0a6ca8"/><path d="M11 5 L17 11 L11 17 L5 11 Z" fill="#00c4f4"/></svg>
<div class="t" style="left:773px;top:337.28px;font-size:16.5px;color:#fff;font-family:'Liberation Sans', sans-serif;">enable</div>
<div class="t" style="left:937px;top:337.28px;font-size:16.5px;color:#fff;font-family:'Liberation Sans', sans-serif;">2'h1</div>
<div class="t" style="left:1003px;top:337.28px;font-size:16.5px;color:#fff;font-family:'Liberation Sans', sans-serif;">Pack...</div>
<div class="t" style="left:1060px;top:337.28px;font-size:16.5px;color:#fff;font-family:'Liberation Sans', sans-serif;">Internal</div>
<svg style="left:745px;top:358px" width="22" height="22" viewBox="0 0 22 22"><path d="M11 0 L22 11 L11 22 L0 11 Z" fill="#1590d0"/><path d="M11 0 L11 5 L5 11 L0 11 Z" fill="#90e0fa"/><path d="M11 0 L22 11 L17 11 L11 5 Z" fill="#1aa2e2"/><path d="M0 11 L5 11 L11 17 L11 22 Z" fill="#1288c8"/><path d="M22 11 L11 22 L11 17 L17 11 Z" fill="#0a6ca8"/><path d="M11 5 L17 11 L11 17 L5 11 Z" fill="#00c4f4"/></svg>
<div class="t" style="left:773px;top:361.28px;font-size:16.5px;color:#fff;font-family:'Liberation Sans', sans-serif;">clk</div>
<div class="t" style="left:937px;top:361.28px;font-size:16.5px;color:#fff;font-family:'Liberation Sans', sans-serif;">1'h1</div>
<div class="t" style="left:1003px;top:361.28px;font-size:16.5px;color:#fff;font-family:'Liberation Sans', sans-serif;">Regi...</div>
<div class="t" style="left:1060px;top:361.28px;font-size:16.5px;color:#fff;font-family:'Liberation Sans', sans-serif;">Internal</div>
<div style="left:710px;top:517px;width:699px;height:340px;background:#f0f0f0;border-top:1px solid #a0a0a0;border-left:1px solid #a0a0a0;border-right:1px solid #fff;border-bottom:1px solid #fff"></div>
<div style="left:711px;top:518px;width:697px;height:338px;border-top:1px solid #fff;border-left:1px solid #fff;border-right:1px solid #a0a0a0;border-bottom:1px solid #a0a0a0"></div>
<svg style="left:715px;top:522px;" width="24" height="24" viewBox="0 0 24 24"><g fill="#3a6a98"><circle cx="12" cy="12" r="8"/><rect x="10" y="1" width="4" height="6" transform="rotate(0 12 12)"/><rect x="10" y="1" width="4" height="6" transform="rotate(45 12 12)"/><rect x="10" y="1" width="4" height="6" transform="rotate(90 12 12)"/><rect x="10" y="1" width="4" height="6" transform="rotate(135 12 12)"/><rect x="10" y="1" width="4" height="6" transform="rotate(180 12 12)"/><rect x="10" y="1" width="4" height="6" transform="rotate(225 12 12)"/><rect x="10" y="1" width="4" height="6" transform="rotate(270 12 12)"/><rect x="10" y="1" width="4" height="6" transform="rotate(315 12 12)"/></g><circle cx="12" cy="12" r="3.5" fill="#f0f0f0"/></svg>
<div class="t" style="left:743px;top:525.73px;font-size:16.2px;color:#000;font-family:'Liberation Sans', sans-serif;">Processes (Active)</div>
<div style="left:885px;top:528px;width:443px;height:2px;background:#fcfcfc"></div>
<div style="left:885px;top:530px;width:443px;height:2px;background:#808080"></div>
<div style="left:885px;top:535.5px;width:443px;height:2px;background:#fcfcfc"></div>
<div style="left:885px;top:537.5px;width:443px;height:2px;background:#808080"></div>
<div style="left:1326px;top:528px;width:2px;height:11.5px;background:#808080"></div>
<div style="left:1089.5px;top:527px;width:34px;height:14px;background:#f0f0f0"></div>
<div style="left:1092.5px;top:528px;width:28px;height:12px;background-image:radial-gradient(circle,#3a3a3a 0.9px,transparent 1.1px);background-size:4.6px 4px;background-position:0 0"></div>
<div style="left:1382px;top:524px;width:20px;height:19px;background:#f0f0f0;border-top:1px solid #fff;border-left:1px solid #fff;border-right:2px solid #9a9a9a;border-bottom:2px solid #9a9a9a"></div>
<svg style="left:1386px;top:527px;" width="12" height="12" viewBox="0 0 12 12"><path d="M1.5 1.5 L10.5 10.5 M10.5 1.5 L1.5 10.5" stroke="#000" stroke-width="1.9"/></svg>
<div style="left:1358px;top:524px;width:20px;height:19px;background:#f0f0f0;border-top:1px solid #fff;border-left:1px solid #fff;border-right:2px solid #9a9a9a;border-bottom:2px solid #9a9a9a"></div>
<svg style="left:1361px;top:527px;" width="14" height="14" viewBox="0 0 14 14"><rect x="2" y="7" width="5.5" height="5.5" fill="none" stroke="#000" stroke-width="1.6"/><path d="M5 9.5 L11.5 3 M7.5 2.5 H12 V7" fill="none" stroke="#000" stroke-width="2"/></svg>
<div style="left:1334px;top:524px;width:20px;height:19px;background:#f0f0f0;border-top:1px solid #fff;border-left:1px solid #fff;border-right:2px solid #9a9a9a;border-bottom:2px solid #9a9a9a"></div>
<svg style="left:1337px;top:527px;" width="13" height="13" viewBox="0 0 13 13"><path d="M6.5 1.5 V11.5 M1.5 6.5 H11.5" stroke="#000" stroke-width="2.5"/></svg>
<div style="left:713px;top:548px;width:691px;height:26px;background:#f0f0f0;border-top:1px solid #fff;border-left:1px solid #fff;border-bottom:2px solid #a0a0a0;border-right:1px solid #a0a0a0"></div>
<div style="left:731px;top:549px;width:2px;height:23px;border-left:1px solid #a0a0a0;border-right:1px solid #fff"></div>
<div style="left:933px;top:549px;width:2px;height:23px;border-left:1px solid #a0a0a0;border-right:1px solid #fff"></div>
<div style="left:1089px;top:549px;width:2px;height:23px;border-left:1px solid #a0a0a0;border-right:1px solid #fff"></div>
<div style="left:1175px;top:549px;width:2px;height:23px;border-left:1px solid #a0a0a0;border-right:1px solid #fff"></div>
<div style="left:1242px;top:549px;width:2px;height:23px;border-left:1px solid #a0a0a0;border-right:1px solid #fff"></div>
<div style="left:1389px;top:549px;width:2px;height:23px;border-left:1px solid #a0a0a0;border-right:1px solid #fff"></div>
<div class="t" style="left:734px;top:553.73px;font-size:16.2px;color:#000;font-family:'Liberation Sans', sans-serif;">Name</div>
<div class="t" style="left:936px;top:553.73px;font-size:16.2px;color:#000;font-family:'Liberation Sans', sans-serif;">Type (filtered)</div>
<div class="t" style="left:1092px;top:553.73px;font-size:16.2px;color:#000;font-family:'Liberation Sans', sans-serif;">State</div>
<div class="t" style="left:1179px;top:553.73px;font-size:16.2px;color:#000;font-family:'Liberation Sans', sans-serif;">Order</div>
<div class="t" style="left:1246px;top:553.73px;font-size:16.2px;color:#000;font-family:'Liberation Sans', sans-serif;">Parent Path</div>
<div class="t" style="left:1391px;top:553.73px;font-size:16.2px;color:#000;font-family:'Liberation Sans', sans-serif;">Cl</div>
<svg style="left:718px;top:555px;" width="13" height="12" viewBox="0 0 13 12"><path d="M0.5 0.5 H12.5 L6.5 10 Z" fill="#333"/><path d="M3 1.5 H10 L6.5 7 Z" fill="#777"/></svg>
<div style="left:714px;top:574px;width:690px;height:251px;background:#8aa2ff"></div>
<div style="left:714px;top:825px;width:690px;height:28px;background:#f0f0f0"></div>
<div style="left:738px;top:826px;width:644px;height:26px;background:repeating-conic-gradient(#f4f4f4 0 25%,#e8e8e8 0 50%) 0 0/2px 2px"></div>
<div style="left:738px;top:826px;width:498px;height:26px;background:#f0f0f0;border-top:1px solid #fff;border-left:1px solid #fff;border-right:2px solid #8a8a8a;border-bottom:2px solid #8a8a8a"></div>
<div style="left:716px;top:826px;width:22px;height:26px;background:#f0f0f0;border-top:1px solid #fff;border-left:1px solid #fff;border-right:2px solid #8a8a8a;border-bottom:2px solid #8a8a8a"></div>
<div style="left:1382px;top:826px;width:22px;height:26px;background:#f0f0f0;border-top:1px solid #fff;border-left:1px solid #fff;border-right:2px solid #8a8a8a;border-bottom:2px solid #8a8a8a"></div>
<svg style="left:722px;top:833px;" width="10" height="12" viewBox="0 0 10 12"><path d="M7 1 L2 6 L7 11 Z" fill="#111"/></svg>
<svg style="left:1388px;top:833px;" width="10" height="12" viewBox="0 0 10 12"><path d="M2 1 L7 6 L2 11 Z" fill="#111"/></svg>
<div style="left:1418px;top:177px;width:2119px;height:680px;background:#f0f0f0;border-top:1px solid #a0a0a0;border-left:1px solid #a0a0a0;border-right:1px solid #fff;border-bottom:1px solid #fff"></div>
<div style="left:1419px;top:178px;width:2117px;height:678px;border-top:1px solid #fff;border-left:1px solid #fff;border-right:1px solid #a0a0a0;border-bottom:1px solid #a0a0a0"></div>
<div style="left:1421px;top:180px;width:3112px;height:27px;background:#9bb4d3"></div>
<svg style="left:1424px;top:182px;" width="25" height="24" viewBox="0 0 25 24"><rect x="0.5" y="0.5" width="23" height="22" fill="#f0f0f0" stroke="#111"/><rect x="2" y="6" width="20" height="15" fill="#000"/><path d="M3 13 H7 V9 H12 V13 H16 V10 H21" fill="none" stroke="#0c0" stroke-width="1.4"/><path d="M3 18 H8 V15 M13 19 H21" stroke="#0c0" stroke-width="1.2" fill="none"/><path d="M14 19 H21" stroke="#6020e0" stroke-width="1.4"/><path d="M10 7 V21" stroke="#0cc" stroke-width="1"/></svg>
<div class="t" style="left:1451px;top:184.73px;font-size:16.2px;color:#000;font-family:'Liberation Sans', sans-serif;">Wave - Default</div>
<div style="left:1572px;top:188px;width:1883px;height:2px;background:#c8ecf6"></div>
<div style="left:1572px;top:190px;width:1883px;height:2px;background:#1a1e24"></div>
<div style="left:1572px;top:195.5px;width:1883px;height:2px;background:#c8ecf6"></div>
<div style="left:1572px;top:197.5px;width:1883px;height:2px;background:#1a1e24"></div>
<div style="left:3453px;top:188px;width:2px;height:11.5px;background:#1a1e24"></div>
<div style="left:2497px;top:186px;width:34px;height:14px;background:#9bb4d3"></div>
<div style="left:2500px;top:187px;width:28px;height:12px;background-image:radial-gradient(circle,#3a3a3a 0.9px,transparent 1.1px);background-size:4.6px 4px"></div>
<div style="left:3509px;top:183px;width:20px;height:19px;background:#f0f0f0;border-top:1px solid #fff;border-left:1px solid #fff;border-right:2px solid #9a9a9a;border-bottom:2px solid #9a9a9a"></div>
<svg style="left:3513px;top:186px;" width="12" height="12" viewBox="0 0 12 12"><path d="M1.5 1.5 L10.5 10.5 M10.5 1.5 L1.5 10.5" stroke="#000" stroke-width="1.9"/></svg>
<div style="left:3485px;top:183px;width:20px;height:19px;background:#f0f0f0;border-top:1px solid #fff;border-left:1px solid #fff;border-right:2px solid #9a9a9a;border-bottom:2px solid #9a9a9a"></div>
<svg style="left:3488px;top:186px;" width="14" height="14" viewBox="0 0 14 14"><rect x="2" y="7" width="5.5" height="5.5" fill="none" stroke="#000" stroke-width="1.6"/><path d="M5 9.5 L11.5 3 M7.5 2.5 H12 V7" fill="none" stroke="#000" stroke-width="2"/></svg>
<div style="left:3461px;top:183px;width:20px;height:19px;background:#f0f0f0;border-top:1px solid #fff;border-left:1px solid #fff;border-right:2px solid #9a9a9a;border-bottom:2px solid #9a9a9a"></div>
<svg style="left:3464px;top:186px;" width="13" height="13" viewBox="0 0 13 13"><path d="M6.5 1.5 V11.5 M1.5 6.5 H11.5" stroke="#000" stroke-width="2.5"/></svg>
<div style="left:1421px;top:207px;width:3112px;height:2px;background:#f0f0f0"></div>
<div style="left:1423px;top:209px;width:2078px;height:645px;background:#fff"></div>
<div style="left:1421px;top:209px;width:2px;height:644px;background:#a8a8a8"></div>
<div style="left:1423px;top:209px;width:388px;height:29px;background:#808080"></div>
<div style="left:1815px;top:209px;width:434px;height:29px;background:#808080"></div>
<div style="left:2249px;top:209px;width:1252px;height:29px;background:#000"></div>
<svg style="left:1438px;top:212px;" width="40" height="26" viewBox="0 0 40 26"><path d="M1.5 9 L8 2.5 L12 6.5 L5.5 13 Z" fill="#c030e0" stroke="#8010a0" stroke-width="0.8"/><rect x="12" y="8.5" width="11" height="11" fill="#18b040" stroke="#108030" stroke-width="0.8"/><circle cx="14" cy="9" r="5" fill="#00e8f8" stroke="#5090a0" stroke-width="0.8"/><path d="M0.5 16 L8 8.5 L15.5 16 L8 23.5 Z" fill="#0a55e8"/><path d="M31 11 H38 L34.5 15 Z" fill="#111"/></svg>
<div class="t" style="left:1436px;width:800px;text-align:right;top:215.97px;font-size:16.5px;color:#f4f4f4;font-family:'Liberation Sans', sans-serif;">Msgs</div>
<div style="left:1436px;top:241px;width:375px;height:514px;background:#808080"></div>
<div style="left:1815px;top:241px;width:434px;height:514px;background:#808080"></div>
<div style="left:2249px;top:241px;width:1252px;height:513px;background:#000"></div>
<div style="left:1441px;top:448px;width:365px;height:2px;background:#111"></div>
<svg style="left:1437px;top:443px;" width="10" height="12" viewBox="0 0 10 12"><path d="M1 1 L8 6 L1 11 Z" fill="none" stroke="#111" stroke-width="1.2"/></svg>
<div style="left:1820px;top:448px;width:420px;height:2px;background:#111"></div>
<div style="left:1444px;top:250.8px;width:15px;height:15px;background:linear-gradient(#ffffff,#dfe4f0);border-radius:2px;border-right:1px solid #8890a0;border-bottom:1px solid #8890a0"></div>
<svg style="left:1444px;top:250.8px;" width="15" height="15" viewBox="0 0 15 15"><path d="M3.5 8 H11.5" stroke="#000" stroke-width="1.7"/><path d="M7.5 4 V12" stroke="#000" stroke-width="1.7"/></svg>
<div style="left:1459px;top:257.8px;width:8px;height:1.5px;background:#c8c8c8"></div>
<svg style="left:1466px;top:245.8px" width="22" height="22" viewBox="0 0 22 22"><path d="M11 0 L22 11 L11 22 L0 11 Z" fill="#1590d0"/><path d="M11 0 L11 5 L5 11 L0 11 Z" fill="#90e0fa"/><path d="M11 0 L22 11 L17 11 L11 5 Z" fill="#1aa2e2"/><path d="M0 11 L5 11 L11 17 L11 22 Z" fill="#1288c8"/><path d="M22 11 L11 22 L11 17 L17 11 Z" fill="#0a6ca8"/><path d="M11 5 L17 11 L11 17 L5 11 Z" fill="#00c4f4"/></svg>
<div class="t" style="left:1495px;top:248.58px;font-size:16.5px;color:#f8f8f8;font-family:'Liberation Sans', sans-serif;">/lab2_cc_testbench/seg</div>
<div class="t" style="left:1818px;top:248.58px;font-size:16.5px;color:#f8f8f8;font-family:'Liberation Sans', sans-serif;">7'b0000110</div>
<div style="left:1444px;top:276.43px;width:15px;height:15px;background:linear-gradient(#ffffff,#dfe4f0);border-radius:2px;border-right:1px solid #8890a0;border-bottom:1px solid #8890a0"></div>
<svg style="left:1444px;top:276.43px;" width="15" height="15" viewBox="0 0 15 15"><path d="M3.5 8 H11.5" stroke="#000" stroke-width="1.7"/><path d="M7.5 4 V12" stroke="#000" stroke-width="1.7"/></svg>
<div style="left:1459px;top:283.43px;width:8px;height:1.5px;background:#c8c8c8"></div>
<svg style="left:1466px;top:271.43px" width="22" height="22" viewBox="0 0 22 22"><path d="M11 0 L22 11 L11 22 L0 11 Z" fill="#1590d0"/><path d="M11 0 L11 5 L5 11 L0 11 Z" fill="#90e0fa"/><path d="M11 0 L22 11 L17 11 L11 5 Z" fill="#1aa2e2"/><path d="M0 11 L5 11 L11 17 L11 22 Z" fill="#1288c8"/><path d="M22 11 L11 22 L11 17 L17 11 Z" fill="#0a6ca8"/><path d="M11 5 L17 11 L11 17 L5 11 Z" fill="#00c4f4"/></svg>
<div class="t" style="left:1495px;top:274.21px;font-size:16.5px;color:#f8f8f8;font-family:'Liberation Sans', sans-serif;">/lab2_cc_testbench/scounttop</div>
<div class="t" style="left:1818px;top:274.21px;font-size:16.5px;color:#f8f8f8;font-family:'Liberation Sans', sans-serif;">8'b10010001</div>
<svg style="left:1466px;top:297.06px" width="22" height="22" viewBox="0 0 22 22"><path d="M11 0 L22 11 L11 22 L0 11 Z" fill="#1590d0"/><path d="M11 0 L11 5 L5 11 L0 11 Z" fill="#90e0fa"/><path d="M11 0 L22 11 L17 11 L11 5 Z" fill="#1aa2e2"/><path d="M0 11 L5 11 L11 17 L11 22 Z" fill="#1288c8"/><path d="M22 11 L11 22 L11 17 L17 11 Z" fill="#0a6ca8"/><path d="M11 5 L17 11 L11 17 L5 11 Z" fill="#00c4f4"/></svg>
<div class="t" style="left:1495px;top:299.84px;font-size:16.5px;color:#f8f8f8;font-family:'Liberation Sans', sans-serif;">/lab2_cc_testbench/reset</div>
<div class="t" style="left:1818px;top:299.84px;font-size:16.5px;color:#f8f8f8;font-family:'Liberation Sans', sans-serif;">1'h1</div>
<div style="left:1444px;top:327.69px;width:15px;height:15px;background:linear-gradient(#ffffff,#dfe4f0);border-radius:2px;border-right:1px solid #8890a0;border-bottom:1px solid #8890a0"></div>
<svg style="left:1444px;top:327.69px;" width="15" height="15" viewBox="0 0 15 15"><path d="M3.5 8 H11.5" stroke="#000" stroke-width="1.7"/><path d="M7.5 4 V12" stroke="#000" stroke-width="1.7"/></svg>
<div style="left:1459px;top:334.69px;width:8px;height:1.5px;background:#c8c8c8"></div>
<svg style="left:1466px;top:322.69px" width="22" height="22" viewBox="0 0 22 22"><path d="M11 0 L22 11 L11 22 L0 11 Z" fill="#1590d0"/><path d="M11 0 L11 5 L5 11 L0 11 Z" fill="#90e0fa"/><path d="M11 0 L22 11 L17 11 L11 5 Z" fill="#1aa2e2"/><path d="M0 11 L5 11 L11 17 L11 22 Z" fill="#1288c8"/><path d="M22 11 L11 22 L11 17 L17 11 Z" fill="#0a6ca8"/><path d="M11 5 L17 11 L11 17 L5 11 Z" fill="#00c4f4"/></svg>
<div class="t" style="left:1495px;top:325.47px;font-size:16.5px;color:#f8f8f8;font-family:'Liberation Sans', sans-serif;">/lab2_cc_testbench/led</div>
<div class="t" style="left:1818px;top:325.47px;font-size:16.5px;color:#f8f8f8;font-family:'Liberation Sans', sans-serif;">5'b01010</div>
<div style="left:1444px;top:353.32px;width:15px;height:15px;background:linear-gradient(#ffffff,#dfe4f0);border-radius:2px;border-right:1px solid #8890a0;border-bottom:1px solid #8890a0"></div>
<svg style="left:1444px;top:353.32px;" width="15" height="15" viewBox="0 0 15 15"><path d="M3.5 8 H11.5" stroke="#000" stroke-width="1.7"/></svg>
<div style="left:1459px;top:360.32px;width:8px;height:1.5px;background:#c8c8c8"></div>
<svg style="left:1466px;top:348.32px" width="22" height="22" viewBox="0 0 22 22"><path d="M11 0 L22 11 L11 22 L0 11 Z" fill="#1590d0"/><path d="M11 0 L11 5 L5 11 L0 11 Z" fill="#90e0fa"/><path d="M11 0 L22 11 L17 11 L11 5 Z" fill="#1aa2e2"/><path d="M0 11 L5 11 L11 17 L11 22 Z" fill="#1288c8"/><path d="M22 11 L11 22 L11 17 L17 11 Z" fill="#0a6ca8"/><path d="M11 5 L17 11 L11 17 L5 11 Z" fill="#00c4f4"/></svg>
<div class="t" style="left:1495px;top:351.1px;font-size:16.5px;color:#f8f8f8;font-family:'Liberation Sans', sans-serif;">/lab2_cc_testbench/enable</div>
<div class="t" style="left:1818px;top:351.1px;font-size:16.5px;color:#f8f8f8;font-family:'Liberation Sans', sans-serif;">2'h1</div>
<svg style="left:1493px;top:373.95000000000005px" width="22" height="22" viewBox="0 0 22 22"><path d="M11 0 L22 11 L11 22 L0 11 Z" fill="#1590d0"/><path d="M11 0 L11 5 L5 11 L0 11 Z" fill="#90e0fa"/><path d="M11 0 L22 11 L17 11 L11 5 Z" fill="#1aa2e2"/><path d="M0 11 L5 11 L11 17 L11 22 Z" fill="#1288c8"/><path d="M22 11 L11 22 L11 17 L17 11 Z" fill="#0a6ca8"/><path d="M11 5 L17 11 L11 17 L5 11 Z" fill="#00c4f4"/></svg>
<div class="t" style="left:1523px;top:376.73px;font-size:16.5px;color:#f8f8f8;font-family:'Liberation Sans', sans-serif;">[1]</div>
<div class="t" style="left:1818px;top:376.73px;font-size:16.5px;color:#f8f8f8;font-family:'Liberation Sans', sans-serif;">0</div>
<svg style="left:1493px;top:399.58000000000004px" width="22" height="22" viewBox="0 0 22 22"><path d="M11 0 L22 11 L11 22 L0 11 Z" fill="#1590d0"/><path d="M11 0 L11 5 L5 11 L0 11 Z" fill="#90e0fa"/><path d="M11 0 L22 11 L17 11 L11 5 Z" fill="#1aa2e2"/><path d="M0 11 L5 11 L11 17 L11 22 Z" fill="#1288c8"/><path d="M22 11 L11 22 L11 17 L17 11 Z" fill="#0a6ca8"/><path d="M11 5 L17 11 L11 17 L5 11 Z" fill="#00c4f4"/></svg>
<div class="t" style="left:1523px;top:402.36px;font-size:16.5px;color:#f8f8f8;font-family:'Liberation Sans', sans-serif;">[0]</div>
<div class="t" style="left:1818px;top:402.36px;font-size:16.5px;color:#f8f8f8;font-family:'Liberation Sans', sans-serif;">1</div>
<svg style="left:1466px;top:425.21000000000004px" width="22" height="22" viewBox="0 0 22 22"><path d="M11 0 L22 11 L11 22 L0 11 Z" fill="#1590d0"/><path d="M11 0 L11 5 L5 11 L0 11 Z" fill="#90e0fa"/><path d="M11 0 L22 11 L17 11 L11 5 Z" fill="#1aa2e2"/><path d="M0 11 L5 11 L11 17 L11 22 Z" fill="#1288c8"/><path d="M22 11 L11 22 L11 17 L17 11 Z" fill="#0a6ca8"/><path d="M11 5 L17 11 L11 17 L5 11 Z" fill="#00c4f4"/></svg>
<div class="t" style="left:1495px;top:427.99px;font-size:16.5px;color:#f8f8f8;font-family:'Liberation Sans', sans-serif;">/lab2_cc_testbench/clk</div>
<div class="t" style="left:1818px;top:427.99px;font-size:16.5px;color:#f8f8f8;font-family:'Liberation Sans', sans-serif;">1'h1</div>
<div style="left:1477.5px;top:368px;width:1.5px;height:44px;background:#e8e8e8"></div>
<div style="left:1477.5px;top:384.5px;width:15px;height:1.5px;background:#e8e8e8"></div>
<div style="left:1477.5px;top:410.5px;width:15px;height:1.5px;background:#e8e8e8"></div>
<svg style="left:2249px;top:241px" width="1252" height="513" viewBox="0 0 1252 513"><rect x="64.51" y="0" width="1.4" height="513" fill="#8c8c8c"/><rect x="124.82" y="0" width="1.4" height="513" fill="#8c8c8c"/><rect x="185.13" y="0" width="1.4" height="513" fill="#8c8c8c"/><rect x="245.44" y="0" width="1.4" height="513" fill="#8c8c8c"/><rect x="305.75" y="0" width="1.4" height="513" fill="#8c8c8c"/><rect x="366.06" y="0" width="1.4" height="513" fill="#8c8c8c"/><rect x="426.37" y="0" width="1.4" height="513" fill="#8c8c8c"/><rect x="486.68" y="0" width="1.4" height="513" fill="#8c8c8c"/><rect x="546.99" y="0" width="1.4" height="513" fill="#8c8c8c"/><rect x="607.3" y="0" width="1.4" height="513" fill="#8c8c8c"/><rect x="667.61" y="0" width="1.4" height="513" fill="#8c8c8c"/><rect x="727.92" y="0" width="1.4" height="513" fill="#8c8c8c"/><rect x="788.23" y="0" width="1.4" height="513" fill="#8c8c8c"/><rect x="848.54" y="0" width="1.4" height="513" fill="#8c8c8c"/><rect x="908.85" y="0" width="1.4" height="513" fill="#8c8c8c"/><rect x="969.16" y="0" width="1.4" height="513" fill="#8c8c8c"/><rect x="1029.47" y="0" width="1.4" height="513" fill="#8c8c8c"/><rect x="1089.78" y="0" width="1.4" height="513" fill="#8c8c8c"/><rect x="1150.09" y="0" width="1.4" height="513" fill="#8c8c8c"/><rect x="1210.4" y="0" width="1.4" height="513" fill="#8c8c8c"/><defs><pattern id="dn0" patternUnits="userSpaceOnUse" x="5" y="6" width="12" height="20">
<rect width="12" height="20" fill="#b4f8b4"/>
<rect x="0" y="0" width="1" height="6" fill="#000"/><rect x="7" y="0" width="1" height="6" fill="#000"/><rect x="4" y="0" width="1" height="4" fill="#000"/>
<rect x="11" y="6" width="1" height="8" fill="#000"/><rect x="3" y="6" width="1" height="8" fill="#000"/><rect x="6" y="6" width="1" height="8" fill="#000"/>
<rect x="0" y="8.5" width="1" height="3" fill="#000"/><rect x="7" y="8.5" width="1" height="3" fill="#000"/><rect x="1" y="9.5" width="1" height="1" fill="#000"/><rect x="8" y="9.5" width="1" height="1" fill="#000"/>
<rect x="0" y="14" width="1" height="6" fill="#000"/><rect x="7" y="14" width="1" height="6" fill="#000"/><rect x="4" y="16" width="1" height="4" fill="#000"/>
</pattern><pattern id="dn1" patternUnits="userSpaceOnUse" x="5" y="32" width="12" height="20">
<rect width="12" height="20" fill="#b4f8b4"/>
<rect x="0" y="0" width="1" height="6" fill="#000"/><rect x="7" y="0" width="1" height="6" fill="#000"/><rect x="4" y="0" width="1" height="4" fill="#000"/>
<rect x="11" y="6" width="1" height="8" fill="#000"/><rect x="3" y="6" width="1" height="8" fill="#000"/><rect x="6" y="6" width="1" height="8" fill="#000"/>
<rect x="0" y="8.5" width="1" height="3" fill="#000"/><rect x="7" y="8.5" width="1" height="3" fill="#000"/><rect x="1" y="9.5" width="1" height="1" fill="#000"/><rect x="8" y="9.5" width="1" height="1" fill="#000"/>
<rect x="0" y="14" width="1" height="6" fill="#000"/><rect x="7" y="14" width="1" height="6" fill="#000"/><rect x="4" y="16" width="1" height="4" fill="#000"/>
</pattern><pattern id="dn2" patternUnits="userSpaceOnUse" x="5" y="83" width="12" height="20">
<rect width="12" height="20" fill="#b4f8b4"/>
<rect x="0" y="0" width="1" height="6" fill="#000"/><rect x="7" y="0" width="1" height="6" fill="#000"/><rect x="4" y="0" width="1" height="4" fill="#000"/>
<rect x="11" y="6" width="1" height="8" fill="#000"/><rect x="3" y="6" width="1" height="8" fill="#000"/><rect x="6" y="6" width="1" height="8" fill="#000"/>
<rect x="0" y="8.5" width="1" height="3" fill="#000"/><rect x="7" y="8.5" width="1" height="3" fill="#000"/><rect x="1" y="9.5" width="1" height="1" fill="#000"/><rect x="8" y="9.5" width="1" height="1" fill="#000"/>
<rect x="0" y="14" width="1" height="6" fill="#000"/><rect x="7" y="14" width="1" height="6" fill="#000"/><rect x="4" y="16" width="1" height="4" fill="#000"/>
</pattern></defs><rect x="5.5" y="6" width="615.5" height="20" fill="url(#dn0)"/><path d="M621 6 L625 6.5 H1248 M621 26 L625 25.5 H1248" fill="none" stroke="#a6eea6" stroke-width="1.6"/><rect x="5.5" y="32" width="615.5" height="20" fill="url(#dn1)"/><path d="M621 32 L625 32.5 H1248 M621 52 L625 51.5 H1248" fill="none" stroke="#a6eea6" stroke-width="1.6"/><rect x="5.5" y="83" width="615.5" height="20" fill="url(#dn2)"/><path d="M621 83 L625 83.5 H1248 M621 103 L625 102.5 H1248" fill="none" stroke="#a6eea6" stroke-width="1.6"/><path d="M37.699999999999996 13.75 L39.9 6.300000000000011 H39.8 L42.0 13.75 V18.75 L39.8 26.19999999999999 H39.9 L37.699999999999996 18.75 Z" fill="#000" stroke="#a6eea6" stroke-width="1.5"/><path d="M44.099999999999994 13.75 L46.3 6.300000000000011 H65.3 L67.5 13.75 V18.75 L65.3 26.19999999999999 H46.3 L44.099999999999994 18.75 Z" fill="#000" stroke="#a6eea6" stroke-width="1.5"/><path d="M103.39999999999999 13.75 L105.6 6.300000000000011 H117.5 L119.7 13.75 V18.75 L117.5 26.19999999999999 H105.6 L103.39999999999999 18.75 Z" fill="#000" stroke="#a6eea6" stroke-width="1.5"/><path d="M121.8 13.75 L124.0 6.300000000000011 H131.9 L134.1 13.75 V18.75 L131.9 26.19999999999999 H124.0 L121.8 18.75 Z" fill="#000" stroke="#a6eea6" stroke-width="1.5"/><path d="M171.3 13.75 L173.5 6.300000000000011 H193.5 L195.7 13.75 V18.75 L193.5 26.19999999999999 H173.5 L171.3 18.75 Z" fill="#000" stroke="#a6eea6" stroke-width="1.5"/><path d="M237.8 13.75 L240.0 6.300000000000011 H263.6 L265.8 13.75 V18.75 L263.6 26.19999999999999 H240.0 L237.8 18.75 Z" fill="#000" stroke="#a6eea6" stroke-width="1.5"/><path d="M302.8 13.75 L305.0 6.300000000000011 H309.0 L311.2 13.75 V18.75 L309.0 26.19999999999999 H305.0 L302.8 18.75 Z" fill="#000" stroke="#a6eea6" stroke-width="1.5"/><path d="M313.8 13.75 L316.0 6.300000000000011 H331.4 L333.59999999999997 13.75 V18.75 L331.4 26.19999999999999 H316.0 L313.8 18.75 Z" fill="#000" stroke="#a6eea6" stroke-width="1.5"/><path d="M367.8 13.75 L370.0 6.300000000000011 H386.5 L388.7 13.75 V18.75 L386.5 26.19999999999999 H370.0 L367.8 18.75 Z" fill="#000" stroke="#a6eea6" stroke-width="1.5"/><path d="M392.8 13.75 L395.0 6.300000000000011 H395.0 L397.2 13.75 V18.75 L395.0 26.19999999999999 H395.0 L392.8 18.75 Z" fill="#000" stroke="#a6eea6" stroke-width="1.5"/><path d="M434.1 13.75 L436.3 6.300000000000011 H461.4 L463.59999999999997 13.75 V18.75 L461.4 26.19999999999999 H436.3 L434.1 18.75 Z" fill="#000" stroke="#a6eea6" stroke-width="1.5"/><path d="M500.5 13.75 L502.7 6.300000000000011 H502.0 L504.2 13.75 V18.75 L502.0 26.19999999999999 H502.7 L500.5 18.75 Z" fill="#000" stroke="#a6eea6" stroke-width="1.5"/><path d="M507.8 13.75 L510.0 6.300000000000011 H528.0 L530.2 13.75 V18.75 L528.0 26.19999999999999 H510.0 L507.8 18.75 Z" fill="#000" stroke="#a6eea6" stroke-width="1.5"/><path d="M566.8 13.75 L569.0 6.300000000000011 H580.0 L582.2 13.75 V18.75 L580.0 26.19999999999999 H569.0 L566.8 18.75 Z" fill="#000" stroke="#a6eea6" stroke-width="1.5"/><path d="M586.8 13.75 L589.0 6.300000000000011 H593.0 L595.2 13.75 V18.75 L593.0 26.19999999999999 H589.0 L586.8 18.75 Z" fill="#000" stroke="#a6eea6" stroke-width="1.5"/><path d="M5.3 76.5 V58.19999999999999 H1248" fill="none" stroke="#2ee614" stroke-width="1.8"/><path d="M6.3 116.20000000000005 L8.5 109.80000000000001 H33.7 L35.900000000000006 116.20000000000005 V121.20000000000005 L33.7 127.60000000000002 H8.5 L6.3 121.20000000000005 Z" fill="#000" stroke="#a6eea6" stroke-width="1.5"/><path d="M37.5 116.20000000000005 L39.7 109.80000000000001 H66.68 L68.88000000000001 116.20000000000005 V121.20000000000005 L66.68 127.60000000000002 H39.7 L37.5 121.20000000000005 Z" fill="#000" stroke="#a6eea6" stroke-width="1.5"/><path d="M70.48 116.20000000000005 L72.68 109.80000000000001 H99.66 L101.86 116.20000000000005 V121.20000000000005 L99.66 127.60000000000002 H72.68 L70.48 121.20000000000005 Z" fill="#000" stroke="#a6eea6" stroke-width="1.5"/><path d="M103.46 116.20000000000005 L105.66 109.80000000000001 H132.64 L134.83999999999997 116.20000000000005 V121.20000000000005 L132.64 127.60000000000002 H105.66 L103.46 121.20000000000005 Z" fill="#000" stroke="#a6eea6" stroke-width="1.5"/><path d="M136.44 116.20000000000005 L138.64 109.80000000000001 H165.62 L167.82 116.20000000000005 V121.20000000000005 L165.62 127.60000000000002 H138.64 L136.44 121.20000000000005 Z" fill="#000" stroke="#a6eea6" stroke-width="1.5"/><path d="M169.42000000000002 116.20000000000005 L171.62 109.80000000000001 H198.6 L200.79999999999998 116.20000000000005 V121.20000000000005 L198.6 127.60000000000002 H171.62 L169.42000000000002 121.20000000000005 Z" fill="#000" stroke="#a6eea6" stroke-width="1.5"/><path d="M202.4 116.20000000000005 L204.6 109.80000000000001 H231.58 L233.78 116.20000000000005 V121.20000000000005 L231.58 127.60000000000002 H204.6 L202.4 121.20000000000005 Z" fill="#000" stroke="#a6eea6" stroke-width="1.5"/><path d="M235.38000000000002 116.20000000000005 L237.58 109.80000000000001 H264.56 L266.76 116.20000000000005 V121.20000000000005 L264.56 127.60000000000002 H237.58 L235.38000000000002 121.20000000000005 Z" fill="#000" stroke="#a6eea6" stroke-width="1.5"/><path d="M268.36 116.20000000000005 L270.56 109.80000000000001 H297.54 L299.74 116.20000000000005 V121.20000000000005 L297.54 127.60000000000002 H270.56 L268.36 121.20000000000005 Z" fill="#000" stroke="#a6eea6" stroke-width="1.5"/><path d="M301.34000000000003 116.20000000000005 L303.54 109.80000000000001 H330.52 L332.71999999999997 116.20000000000005 V121.20000000000005 L330.52 127.60000000000002 H303.54 L301.34000000000003 121.20000000000005 Z" fill="#000" stroke="#a6eea6" stroke-width="1.5"/><path d="M334.32 116.20000000000005 L336.52 109.80000000000001 H363.5 L365.7 116.20000000000005 V121.20000000000005 L363.5 127.60000000000002 H336.52 L334.32 121.20000000000005 Z" fill="#000" stroke="#a6eea6" stroke-width="1.5"/><path d="M367.3 116.20000000000005 L369.5 109.80000000000001 H396.48 L398.68 116.20000000000005 V121.20000000000005 L396.48 127.60000000000002 H369.5 L367.3 121.20000000000005 Z" fill="#000" stroke="#a6eea6" stroke-width="1.5"/><path d="M400.28000000000003 116.20000000000005 L402.48 109.80000000000001 H429.46 L431.65999999999997 116.20000000000005 V121.20000000000005 L429.46 127.60000000000002 H402.48 L400.28000000000003 121.20000000000005 Z" fill="#000" stroke="#a6eea6" stroke-width="1.5"/><path d="M433.26 116.20000000000005 L435.46 109.80000000000001 H462.44 L464.64 116.20000000000005 V121.20000000000005 L462.44 127.60000000000002 H435.46 L433.26 121.20000000000005 Z" fill="#000" stroke="#a6eea6" stroke-width="1.5"/><path d="M466.24 116.20000000000005 L468.44 109.80000000000001 H495.42 L497.62 116.20000000000005 V121.20000000000005 L495.42 127.60000000000002 H468.44 L466.24 121.20000000000005 Z" fill="#000" stroke="#a6eea6" stroke-width="1.5"/><path d="M499.22 116.20000000000005 L501.42 109.80000000000001 H528.4 L530.6 116.20000000000005 V121.20000000000005 L528.4 127.60000000000002 H501.42 L499.22 121.20000000000005 Z" fill="#000" stroke="#a6eea6" stroke-width="1.5"/><path d="M532.1999999999999 116.20000000000005 L534.4 109.80000000000001 H561.38 L563.58 116.20000000000005 V121.20000000000005 L561.38 127.60000000000002 H534.4 L532.1999999999999 121.20000000000005 Z" fill="#000" stroke="#a6eea6" stroke-width="1.5"/><path d="M565.18 116.20000000000005 L567.38 109.80000000000001 H594.36 L596.5600000000001 116.20000000000005 V121.20000000000005 L594.36 127.60000000000002 H567.38 L565.18 121.20000000000005 Z" fill="#000" stroke="#a6eea6" stroke-width="1.5"/><path d="M598.16 116.20000000000005 L600.36 109.80000000000001 H627.34 L629.5400000000001 116.20000000000005 V121.20000000000005 L627.34 127.60000000000002 H600.36 L598.16 121.20000000000005 Z" fill="#000" stroke="#a6eea6" stroke-width="1.5"/><path d="M631.14 116.20000000000005 L633.34 109.80000000000001 H660.32 L662.5200000000001 116.20000000000005 V121.20000000000005 L660.32 127.60000000000002 H633.34 L631.14 121.20000000000005 Z" fill="#000" stroke="#a6eea6" stroke-width="1.5"/><path d="M664.12 116.20000000000005 L666.32 109.80000000000001 H693.3 L695.5 116.20000000000005 V121.20000000000005 L693.3 127.60000000000002 H666.32 L664.12 121.20000000000005 Z" fill="#000" stroke="#a6eea6" stroke-width="1.5"/><path d="M697.0999999999999 116.20000000000005 L699.3 109.80000000000001 H726.28 L728.48 116.20000000000005 V121.20000000000005 L726.28 127.60000000000002 H699.3 L697.0999999999999 121.20000000000005 Z" fill="#000" stroke="#a6eea6" stroke-width="1.5"/><path d="M730.0799999999999 116.20000000000005 L732.28 109.80000000000001 H759.26 L761.46 116.20000000000005 V121.20000000000005 L759.26 127.60000000000002 H732.28 L730.0799999999999 121.20000000000005 Z" fill="#000" stroke="#a6eea6" stroke-width="1.5"/><path d="M763.06 116.20000000000005 L765.26 109.80000000000001 H792.24 L794.44 116.20000000000005 V121.20000000000005 L792.24 127.60000000000002 H765.26 L763.06 121.20000000000005 Z" fill="#000" stroke="#a6eea6" stroke-width="1.5"/><path d="M796.04 116.20000000000005 L798.24 109.80000000000001 H825.22 L827.4200000000001 116.20000000000005 V121.20000000000005 L825.22 127.60000000000002 H798.24 L796.04 121.20000000000005 Z" fill="#000" stroke="#a6eea6" stroke-width="1.5"/><path d="M829.02 116.20000000000005 L831.22 109.80000000000001 H858.2 L860.4000000000001 116.20000000000005 V121.20000000000005 L858.2 127.60000000000002 H831.22 L829.02 121.20000000000005 Z" fill="#000" stroke="#a6eea6" stroke-width="1.5"/><path d="M862.0 116.20000000000005 L864.2 109.80000000000001 H891.18 L893.38 116.20000000000005 V121.20000000000005 L891.18 127.60000000000002 H864.2 L862.0 121.20000000000005 Z" fill="#000" stroke="#a6eea6" stroke-width="1.5"/><path d="M894.9799999999999 116.20000000000005 L897.18 109.80000000000001 H924.16 L926.36 116.20000000000005 V121.20000000000005 L924.16 127.60000000000002 H897.18 L894.9799999999999 121.20000000000005 Z" fill="#000" stroke="#a6eea6" stroke-width="1.5"/><path d="M927.9599999999999 116.20000000000005 L930.16 109.80000000000001 H957.14 L959.34 116.20000000000005 V121.20000000000005 L957.14 127.60000000000002 H930.16 L927.9599999999999 121.20000000000005 Z" fill="#000" stroke="#a6eea6" stroke-width="1.5"/><path d="M960.9399999999999 116.20000000000005 L963.14 109.80000000000001 H990.12 L992.32 116.20000000000005 V121.20000000000005 L990.12 127.60000000000002 H963.14 L960.9399999999999 121.20000000000005 Z" fill="#000" stroke="#a6eea6" stroke-width="1.5"/><path d="M993.92 116.20000000000005 L996.12 109.80000000000001 H1023.0999999999999 L1025.3 116.20000000000005 V121.20000000000005 L1023.0999999999999 127.60000000000002 H996.12 L993.92 121.20000000000005 Z" fill="#000" stroke="#a6eea6" stroke-width="1.5"/><path d="M1026.8999999999999 116.20000000000005 L1029.1 109.80000000000001 H1056.08 L1058.28 116.20000000000005 V121.20000000000005 L1056.08 127.60000000000002 H1029.1 L1026.8999999999999 121.20000000000005 Z" fill="#000" stroke="#a6eea6" stroke-width="1.5"/><path d="M1059.8799999999999 116.20000000000005 L1062.08 109.80000000000001 H1089.06 L1091.26 116.20000000000005 V121.20000000000005 L1089.06 127.60000000000002 H1062.08 L1059.8799999999999 121.20000000000005 Z" fill="#000" stroke="#a6eea6" stroke-width="1.5"/><path d="M1092.86 116.20000000000005 L1095.06 109.80000000000001 H1122.04 L1124.24 116.20000000000005 V121.20000000000005 L1122.04 127.60000000000002 H1095.06 L1092.86 121.20000000000005 Z" fill="#000" stroke="#a6eea6" stroke-width="1.5"/><path d="M1125.84 116.20000000000005 L1128.04 109.80000000000001 H1155.02 L1157.22 116.20000000000005 V121.20000000000005 L1155.02 127.60000000000002 H1128.04 L1125.84 121.20000000000005 Z" fill="#000" stroke="#a6eea6" stroke-width="1.5"/><path d="M1158.82 116.20000000000005 L1161.02 109.80000000000001 H1188.0 L1190.2 116.20000000000005 V121.20000000000005 L1188.0 127.60000000000002 H1161.02 L1158.82 121.20000000000005 Z" fill="#000" stroke="#a6eea6" stroke-width="1.5"/><path d="M1191.8 116.20000000000005 L1194.0 109.80000000000001 H1220.98 L1223.18 116.20000000000005 V121.20000000000005 L1220.98 127.60000000000002 H1194.0 L1191.8 121.20000000000005 Z" fill="#000" stroke="#a6eea6" stroke-width="1.5"/><path d="M1224.78 116.20000000000005 L1226.98 109.80000000000001 H1248.0 L1250.2 116.20000000000005 V121.20000000000005 L1248.0 127.60000000000002 H1226.98 L1224.78 121.20000000000005 Z" fill="#000" stroke="#a6eea6" stroke-width="1.5"/><rect x="1248" y="100" width="6" height="140" fill="#000"/><path d="M5.5 152.60000000000002 L36.7 152.60000000000002 L36.7 134.8 L69.68 134.8 L69.68 152.60000000000002 L102.66 152.60000000000002 L102.66 134.8 L135.64 134.8 L135.64 152.60000000000002 L168.62 152.60000000000002 L168.62 134.8 L201.6 134.8 L201.6 152.60000000000002 L234.58 152.60000000000002 L234.58 134.8 L267.56 134.8 L267.56 152.60000000000002 L300.54 152.60000000000002 L300.54 134.8 L333.52 134.8 L333.52 152.60000000000002 L366.5 152.60000000000002 L366.5 134.8 L399.48 134.8 L399.48 152.60000000000002 L432.46 152.60000000000002 L432.46 134.8 L465.44 134.8 L465.44 152.60000000000002 L498.42 152.60000000000002 L498.42 134.8 L531.4 134.8 L531.4 152.60000000000002 L564.38 152.60000000000002 L564.38 134.8 L597.36 134.8 L597.36 152.60000000000002 L630.34 152.60000000000002 L630.34 134.8 L663.32 134.8 L663.32 152.60000000000002 L696.3 152.60000000000002 L696.3 134.8 L729.28 134.8 L729.28 152.60000000000002 L762.26 152.60000000000002 L762.26 134.8 L795.24 134.8 L795.24 152.60000000000002 L828.22 152.60000000000002 L828.22 134.8 L861.2 134.8 L861.2 152.60000000000002 L894.18 152.60000000000002 L894.18 134.8 L927.16 134.8 L927.16 152.60000000000002 L960.14 152.60000000000002 L960.14 134.8 L993.12 134.8 L993.12 152.60000000000002 L1026.1 152.60000000000002 L1026.1 134.8 L1059.08 134.8 L1059.08 152.60000000000002 L1092.06 152.60000000000002 L1092.06 134.8 L1125.04 134.8 L1125.04 152.60000000000002 L1158.02 152.60000000000002 L1158.02 134.8 L1191.0 134.8 L1191.0 152.60000000000002 L1223.98 152.60000000000002 L1223.98 134.8 L1248 134.8" fill="none" stroke="#2ee614" stroke-width="1.8"/><path d="M5.5 160.2 L36.7 160.2 L36.7 178 L69.68 178 L69.68 160.2 L102.66 160.2 L102.66 178 L135.64 178 L135.64 160.2 L168.62 160.2 L168.62 178 L201.6 178 L201.6 160.2 L234.58 160.2 L234.58 178 L267.56 178 L267.56 160.2 L300.54 160.2 L300.54 178 L333.52 178 L333.52 160.2 L366.5 160.2 L366.5 178 L399.48 178 L399.48 160.2 L432.46 160.2 L432.46 178 L465.44 178 L465.44 160.2 L498.42 160.2 L498.42 178 L531.4 178 L531.4 160.2 L564.38 160.2 L564.38 178 L597.36 178 L597.36 160.2 L630.34 160.2 L630.34 178 L663.32 178 L663.32 160.2 L696.3 160.2 L696.3 178 L729.28 178 L729.28 160.2 L762.26 160.2 L762.26 178 L795.24 178 L795.24 160.2 L828.22 160.2 L828.22 178 L861.2 178 L861.2 160.2 L894.18 160.2 L894.18 178 L927.16 178 L927.16 160.2 L960.14 160.2 L960.14 178 L993.12 178 L993.12 160.2 L1026.1 160.2 L1026.1 178 L1059.08 178 L1059.08 160.2 L1092.06 160.2 L1092.06 178 L1125.04 178 L1125.04 160.2 L1158.02 160.2 L1158.02 178 L1191.0 178 L1191.0 160.2 L1223.98 160.2 L1223.98 178 L1248 178" fill="none" stroke="#2ee614" stroke-width="1.8"/><rect x="5.3" y="186.5" width="1242.6999999999998" height="17.8" fill="#33ff11"/></svg>
<div class="t" style="left:2261.5px;top:351.98px;font-size:16.5px;color:#f0f4ff;font-family:'Liberation Sans', sans-serif;">1</div>
<div class="t" style="left:2293.7px;top:351.98px;font-size:16.5px;color:#f0f4ff;font-family:'Liberation Sans', sans-serif;">2</div>
<div class="t" style="left:2326.68px;top:351.98px;font-size:16.5px;color:#f0f4ff;font-family:'Liberation Sans', sans-serif;">1</div>
<div class="t" style="left:2359.66px;top:351.98px;font-size:16.5px;color:#f0f4ff;font-family:'Liberation Sans', sans-serif;">2</div>
<div class="t" style="left:2392.64px;top:351.98px;font-size:16.5px;color:#f0f4ff;font-family:'Liberation Sans', sans-serif;">1</div>
<div class="t" style="left:2425.62px;top:351.98px;font-size:16.5px;color:#f0f4ff;font-family:'Liberation Sans', sans-serif;">2</div>
<div class="t" style="left:2458.6px;top:351.98px;font-size:16.5px;color:#f0f4ff;font-family:'Liberation Sans', sans-serif;">1</div>
<div class="t" style="left:2491.58px;top:351.98px;font-size:16.5px;color:#f0f4ff;font-family:'Liberation Sans', sans-serif;">2</div>
<div class="t" style="left:2524.56px;top:351.98px;font-size:16.5px;color:#f0f4ff;font-family:'Liberation Sans', sans-serif;">1</div>
<div class="t" style="left:2557.54px;top:351.98px;font-size:16.5px;color:#f0f4ff;font-family:'Liberation Sans', sans-serif;">2</div>
<div class="t" style="left:2590.52px;top:351.98px;font-size:16.5px;color:#f0f4ff;font-family:'Liberation Sans', sans-serif;">1</div>
<div class="t" style="left:2623.5px;top:351.98px;font-size:16.5px;color:#f0f4ff;font-family:'Liberation Sans', sans-serif;">2</div>
<div class="t" style="left:2656.4799999999996px;top:351.98px;font-size:16.5px;color:#f0f4ff;font-family:'Liberation Sans', sans-serif;">1</div>
<div class="t" style="left:2689.46px;top:351.98px;font-size:16.5px;color:#f0f4ff;font-family:'Liberation Sans', sans-serif;">2</div>
<div class="t" style="left:2722.4399999999996px;top:351.98px;font-size:16.5px;color:#f0f4ff;font-family:'Liberation Sans', sans-serif;">1</div>
<div class="t" style="left:2755.4199999999996px;top:351.98px;font-size:16.5px;color:#f0f4ff;font-family:'Liberation Sans', sans-serif;">2</div>
<div class="t" style="left:2788.3999999999996px;top:351.98px;font-size:16.5px;color:#f0f4ff;font-family:'Liberation Sans', sans-serif;">1</div>
<div class="t" style="left:2821.3799999999997px;top:351.98px;font-size:16.5px;color:#f0f4ff;font-family:'Liberation Sans', sans-serif;">2</div>
<div class="t" style="left:2854.3599999999997px;top:351.98px;font-size:16.5px;color:#f0f4ff;font-family:'Liberation Sans', sans-serif;">1</div>
<div class="t" style="left:2887.3399999999997px;top:351.98px;font-size:16.5px;color:#f0f4ff;font-family:'Liberation Sans', sans-serif;">2</div>
<div class="t" style="left:2920.3199999999997px;top:351.98px;font-size:16.5px;color:#f0f4ff;font-family:'Liberation Sans', sans-serif;">1</div>
<div class="t" style="left:2953.2999999999997px;top:351.98px;font-size:16.5px;color:#f0f4ff;font-family:'Liberation Sans', sans-serif;">2</div>
<div class="t" style="left:2986.2799999999997px;top:351.98px;font-size:16.5px;color:#f0f4ff;font-family:'Liberation Sans', sans-serif;">1</div>
<div class="t" style="left:3019.2599999999998px;top:351.98px;font-size:16.5px;color:#f0f4ff;font-family:'Liberation Sans', sans-serif;">2</div>
<div class="t" style="left:3052.24px;top:351.98px;font-size:16.5px;color:#f0f4ff;font-family:'Liberation Sans', sans-serif;">1</div>
<div class="t" style="left:3085.22px;top:351.98px;font-size:16.5px;color:#f0f4ff;font-family:'Liberation Sans', sans-serif;">2</div>
<div class="t" style="left:3118.2px;top:351.98px;font-size:16.5px;color:#f0f4ff;font-family:'Liberation Sans', sans-serif;">1</div>
<div class="t" style="left:3151.18px;top:351.98px;font-size:16.5px;color:#f0f4ff;font-family:'Liberation Sans', sans-serif;">2</div>
<div class="t" style="left:3184.16px;top:351.98px;font-size:16.5px;color:#f0f4ff;font-family:'Liberation Sans', sans-serif;">1</div>
<div class="t" style="left:3217.14px;top:351.98px;font-size:16.5px;color:#f0f4ff;font-family:'Liberation Sans', sans-serif;">2</div>
<div class="t" style="left:3250.12px;top:351.98px;font-size:16.5px;color:#f0f4ff;font-family:'Liberation Sans', sans-serif;">1</div>
<div class="t" style="left:3283.0999999999995px;top:351.98px;font-size:16.5px;color:#f0f4ff;font-family:'Liberation Sans', sans-serif;">2</div>
<div class="t" style="left:3316.08px;top:351.98px;font-size:16.5px;color:#f0f4ff;font-family:'Liberation Sans', sans-serif;">1</div>
<div class="t" style="left:3349.0599999999995px;top:351.98px;font-size:16.5px;color:#f0f4ff;font-family:'Liberation Sans', sans-serif;">2</div>
<div class="t" style="left:3382.04px;top:351.98px;font-size:16.5px;color:#f0f4ff;font-family:'Liberation Sans', sans-serif;">1</div>
<div class="t" style="left:3415.0199999999995px;top:351.98px;font-size:16.5px;color:#f0f4ff;font-family:'Liberation Sans', sans-serif;">2</div>
<div class="t" style="left:3448.0px;top:351.98px;font-size:16.5px;color:#f0f4ff;font-family:'Liberation Sans', sans-serif;">1</div>
<div class="t" style="left:3480.9799999999996px;top:351.98px;font-size:16.5px;color:#f0f4ff;font-family:'Liberation Sans', sans-serif;">2</div>
<div class="t" style="left:2877px;top:251.32px;font-size:15.5px;color:#f4f4ff;font-family:'Liberation Sans', sans-serif;">1000000</div>
<div class="t" style="left:2877px;top:276.82px;font-size:15.5px;color:#f4f4ff;font-family:'Liberation Sans', sans-serif;">11111111</div>
<div class="t" style="left:2877px;top:327.82px;font-size:15.5px;color:#f4f4ff;font-family:'Liberation Sans', sans-serif;">11110</div>
<div style="left:2601px;top:209px;width:5px;height:29px;background:#ffd000"></div>
<div style="left:2601px;top:241px;width:5px;height:513px;background:#ffd000"></div>
<div style="left:2601px;top:427px;width:5px;height:18px;background:#d03a10"></div>
<div style="left:1423px;top:238px;width:2078px;height:3px;background:#f4f4f4"></div>
<div style="left:1811px;top:209px;width:4px;height:645px;background:#f8f8f8;border-left:1px solid #a8a8a8"></div>
<div style="left:2245px;top:209px;width:4px;height:645px;background:#f8f8f8;border-left:1px solid #a8a8a8"></div>
<div style="left:1423px;top:755px;width:388px;height:4px;background:#f8f8f8"></div>
<div style="left:1815px;top:755px;width:430px;height:4px;background:#f8f8f8"></div>
<div style="left:2249px;top:754px;width:1252px;height:5px;background:#f4f4f4"></div>
<div style="left:1423px;top:759px;width:388px;height:59px;background:#808080"></div>
<div style="left:1496px;top:792px;width:315px;height:26px;background:#fff"></div>
<div style="left:1815px;top:759px;width:434px;height:33px;background:#808080"></div>
<div style="left:1815px;top:792px;width:434px;height:26px;background:#fff"></div>
<div class="t" style="left:996px;width:800px;text-align:right;top:766.98px;font-size:16.5px;color:#f4f4f4;font-family:'Liberation Sans', sans-serif;">Now</div>
<div class="t" style="left:996px;width:800px;text-align:right;top:797.48px;font-size:16.5px;color:#000;font-family:'Liberation Sans', sans-serif;">Cursor 1</div>
<div class="t" style="left:1430px;width:800px;text-align:right;top:766.98px;font-size:16.5px;color:#f4f4f4;font-family:'Liberation Sans', sans-serif;">1478132737200 ps</div>
<div class="t" style="left:1430px;width:800px;text-align:right;top:797.48px;font-size:16.5px;color:#000;font-family:'Liberation Sans', sans-serif;">29092080000 ps</div>
<svg style="left:1437px;top:764px;" width="54" height="20" viewBox="0 0 54 20"><path d="M2 14 L8 4 L14 14" fill="none" stroke="#333" stroke-width="1.5"/><rect x="2" y="14" width="14" height="2" fill="#2a5ad0"/><rect x="18" y="4" width="15" height="13" fill="#c8d8f0" stroke="#5a80c0"/><path d="M20 8 H31 M20 11 H28" stroke="#fff" stroke-width="1.2"/><circle cx="43" cy="10" r="7" fill="#30b030"/><path d="M39.5 10 H46.5 M43 6.5 V13.5" stroke="#fff" stroke-width="2"/></svg>
<svg style="left:1441px;top:788px;" width="54" height="28" viewBox="0 0 54 28"><rect x="2" y="13" width="14" height="12" fill="#e8b830" stroke="#c08010"/><path d="M5 13 V8 C5 3 13 3 13 8" fill="none" stroke="#a0a0a0" stroke-width="1.6"/><path d="M20 24 L30 14" stroke="#5a90e0" stroke-width="4" stroke-linecap="round"/><path d="M29 8 L32 12 L36 9" fill="none" stroke="#a0b0c0" stroke-width="2"/><circle cx="42" cy="16" r="7.5" fill="#e84040"/><rect x="38" y="14.5" width="8" height="3" fill="#fff"/></svg>
<div style="left:2249px;top:759px;width:1252px;height:59px;background:#000"></div>
<svg style="left:2249px;top:759px" width="1252" height="59" viewBox="0 0 1252 59"><rect x="64.41000000000001" y="3.5" width="1.6" height="7" fill="#2ee614"/><rect x="124.72" y="3.5" width="1.6" height="7" fill="#2ee614"/><rect x="185.03" y="3.5" width="1.6" height="7" fill="#2ee614"/><rect x="245.34" y="3.5" width="1.6" height="7" fill="#2ee614"/><rect x="305.65" y="0" width="1.6" height="13" fill="#2ee614"/><rect x="365.96" y="3.5" width="1.6" height="7" fill="#2ee614"/><rect x="426.27" y="3.5" width="1.6" height="7" fill="#2ee614"/><rect x="486.58" y="3.5" width="1.6" height="7" fill="#2ee614"/><rect x="546.89" y="3.5" width="1.6" height="7" fill="#2ee614"/><rect x="607.1999999999999" y="0" width="1.6" height="13" fill="#2ee614"/><rect x="667.51" y="3.5" width="1.6" height="7" fill="#2ee614"/><rect x="727.8199999999999" y="3.5" width="1.6" height="7" fill="#2ee614"/><rect x="788.13" y="3.5" width="1.6" height="7" fill="#2ee614"/><rect x="848.4399999999999" y="3.5" width="1.6" height="7" fill="#2ee614"/><rect x="908.75" y="0" width="1.6" height="13" fill="#2ee614"/><rect x="969.06" y="3.5" width="1.6" height="7" fill="#2ee614"/><rect x="1029.3700000000001" y="3.5" width="1.6" height="7" fill="#2ee614"/><rect x="1089.68" y="3.5" width="1.6" height="7" fill="#2ee614"/><rect x="1149.99" y="3.5" width="1.6" height="7" fill="#2ee614"/><rect x="1210.3000000000002" y="0" width="1.6" height="13" fill="#2ee614"/><rect x="4" y="33" width="1244" height="1.4" fill="#8a8a8a"/></svg>
<div style="left:2253px;top:759px;width:1244px;height:59px;overflow:hidden"><div class="t" style="left:-18px;top:15.975px;font-size:16.5px;color:#2ee614">0 ps</div><div class="t" style="left:204px;width:800px;text-align:center;top:15.975px;font-size:16.5px;color:#2ee614">50000000000 ps</div><div class="t" style="left:1145px;top:15.975px;font-size:16.5px;color:#2ee614">100000000000 ps</div></div>
<div style="left:2601px;top:759px;width:5px;height:34px;background:#ffd000"></div>
<div style="left:2540px;top:794px;width:127px;height:23px;background:#000;border:1.5px solid #e0b000"></div>
<div class="t" style="left:2203.5px;width:800px;text-align:center;top:797.98px;font-size:16.5px;color:#f0c000;font-family:'Liberation Sans', sans-serif;">29092080000 ps</div>
<div style="left:1423px;top:818px;width:2109px;height:5px;background:#f0f0f0"></div>
<div style="left:1423px;top:823px;width:388px;height:28px;background:#808080"></div>
<div style="left:1436px;top:823px;width:375px;height:26px;background:repeating-conic-gradient(#f4f4f4 0 25%,#e8e8e8 0 50%) 0 0/2px 2px"></div>
<div style="left:1436px;top:823px;width:24px;height:26px;background:#f0f0f0;border-top:1px solid #fff;border-left:1px solid #fff;border-right:2px solid #8a8a8a;border-bottom:2px solid #8a8a8a"></div>
<div style="left:1787px;top:823px;width:24px;height:26px;background:#f0f0f0;border-top:1px solid #fff;border-left:1px solid #fff;border-right:2px solid #8a8a8a;border-bottom:2px solid #8a8a8a"></div>
<svg style="left:1442px;top:829px;" width="12" height="14" viewBox="0 0 12 14"><path d="M9 1 L3 7 L9 13 Z" fill="#999"/></svg>
<svg style="left:1793px;top:829px;" width="12" height="14" viewBox="0 0 12 14"><path d="M3 1 L9 7 L3 13 Z" fill="#999"/></svg>
<div style="left:1815px;top:823px;width:430px;height:26px;background:repeating-conic-gradient(#f4f4f4 0 25%,#e8e8e8 0 50%) 0 0/2px 2px"></div>
<div style="left:1815px;top:823px;width:24px;height:26px;background:#f0f0f0;border-top:1px solid #fff;border-left:1px solid #fff;border-right:2px solid #8a8a8a;border-bottom:2px solid #8a8a8a"></div>
<div style="left:2221px;top:823px;width:24px;height:26px;background:#f0f0f0;border-top:1px solid #fff;border-left:1px solid #fff;border-right:2px solid #8a8a8a;border-bottom:2px solid #8a8a8a"></div>
<svg style="left:1821px;top:829px;" width="12" height="14" viewBox="0 0 12 14"><path d="M9 1 L3 7 L9 13 Z" fill="#999"/></svg>
<svg style="left:2227px;top:829px;" width="12" height="14" viewBox="0 0 12 14"><path d="M3 1 L9 7 L3 13 Z" fill="#999"/></svg>
<div style="left:2249px;top:823px;width:1252px;height:26px;background:#c8c8c8"></div>
<div style="left:2250px;top:825px;width:22px;height:22px;background:#f0f0f0;border-top:1px solid #fff;border-left:1px solid #fff;border-right:2px solid #8a8a8a;border-bottom:2px solid #8a8a8a"></div>
<svg style="left:2256px;top:830px;" width="10" height="13" viewBox="0 0 10 13"><path d="M8 1 L2 6.5 L8 12 Z" fill="#111"/></svg>
<div style="left:2274px;top:825px;width:84px;height:22px;background:#f0f0f0;border-top:1px solid #fff;border-left:1px solid #fff;border-right:2px solid #8a8a8a;border-bottom:2px solid #8a8a8a"></div>
<div style="left:2297px;top:829px;width:1.5px;height:15px;background:#f0c000"></div>
<div style="left:3476px;top:825px;width:22px;height:22px;background:#f0f0f0;border-top:1px solid #fff;border-left:1px solid #fff;border-right:2px solid #8a8a8a;border-bottom:2px solid #8a8a8a"></div>
<svg style="left:3482px;top:830px;" width="10" height="13" viewBox="0 0 10 13"><path d="M2 1 L8 6.5 L2 12 Z" fill="#111"/></svg>
<div style="left:3501px;top:209px;width:5px;height:645px;background:#f0f0f0"></div>
<div style="left:3506px;top:209px;width:26px;height:29px;background:#808080"></div>
<div style="left:3506px;top:241px;width:26px;height:513px;background:repeating-conic-gradient(#f4f4f4 0 25%,#e8e8e8 0 50%) 0 0/2px 2px"></div>
<div style="left:3507px;top:243px;width:22px;height:22px;background:#f0f0f0;border-top:1px solid #fff;border-left:1px solid #fff;border-right:2px solid #8a8a8a;border-bottom:2px solid #8a8a8a"></div>
<svg style="left:3512px;top:250px;" width="12" height="8" viewBox="0 0 12 8"><path d="M1 7 L6 1 L11 7 Z" fill="#111"/></svg>
<div style="left:3507px;top:266px;width:22px;height:464px;background:#f0f0f0;border-top:1px solid #fff;border-left:1px solid #fff;border-right:2px solid #9a9a9a;border-bottom:2px solid #9a9a9a"></div>
<div style="left:3507px;top:730px;width:22px;height:21px;background:#f0f0f0;border-top:1px solid #fff;border-left:1px solid #fff;border-right:2px solid #8a8a8a;border-bottom:2px solid #8a8a8a"></div>
<svg style="left:3512px;top:736px;" width="12" height="8" viewBox="0 0 12 8"><path d="M1 1 L6 7 L11 1 Z" fill="#111"/></svg>
<div style="left:3506px;top:759px;width:26px;height:59px;background:#808080"></div>
<div style="left:3506px;top:823px;width:26px;height:27px;background:#808080"></div>
<div style="left:2px;top:866px;width:3535px;height:400px;background:#f0f0f0;border-top:1px solid #a0a0a0;border-left:1px solid #a0a0a0;border-right:1px solid #fff;border-bottom:1px solid #fff"></div>
<div style="left:3px;top:867px;width:3533px;height:398px;border-top:1px solid #fff;border-left:1px solid #fff;border-right:1px solid #a0a0a0;border-bottom:1px solid #a0a0a0"></div>
<svg style="left:8px;top:870px;" width="21" height="22" viewBox="0 0 21 22"><path d="M1 21 V6 L4 2 H16 L19 6 V21 L15 17 V13 H5 V17 Z" fill="#9a9090"/><rect x="5" y="6" width="10" height="6" fill="#fff"/><path d="M1 21 V6 L4 2" fill="none" stroke="#2a2a2a" stroke-width="2"/><path d="M19 21 V6 L16 2" fill="none" stroke="#2a2a2a" stroke-width="2"/><rect x="5" y="2" width="10" height="3" fill="#c8c0c0"/></svg>
<div class="t" style="left:35px;top:873.73px;font-size:16.2px;color:#000;font-family:'Liberation Sans', sans-serif;">Transcript</div>
<div style="left:118px;top:875px;width:3335px;height:2px;background:#fcfcfc"></div>
<div style="left:118px;top:877px;width:3335px;height:2px;background:#808080"></div>
<div style="left:118px;top:882.5px;width:3335px;height:2px;background:#fcfcfc"></div>
<div style="left:118px;top:884.5px;width:3335px;height:2px;background:#808080"></div>
<div style="left:3451px;top:875px;width:2px;height:11.5px;background:#808080"></div>
<div style="left:1768.5px;top:874px;width:34px;height:14px;background:#f0f0f0"></div>
<div style="left:1771.5px;top:875px;width:28px;height:12px;background-image:radial-gradient(circle,#3a3a3a 0.9px,transparent 1.1px);background-size:4.6px 4px;background-position:0 0"></div>
<div style="left:3509px;top:872px;width:20px;height:19px;background:#f0f0f0;border-top:1px solid #fff;border-left:1px solid #fff;border-right:2px solid #9a9a9a;border-bottom:2px solid #9a9a9a"></div>
<svg style="left:3513px;top:875px;" width="12" height="12" viewBox="0 0 12 12"><path d="M1.5 1.5 L10.5 10.5 M10.5 1.5 L1.5 10.5" stroke="#000" stroke-width="1.9"/></svg>
<div style="left:3485px;top:872px;width:20px;height:19px;background:#f0f0f0;border-top:1px solid #fff;border-left:1px solid #fff;border-right:2px solid #9a9a9a;border-bottom:2px solid #9a9a9a"></div>
<svg style="left:3488px;top:875px;" width="14" height="14" viewBox="0 0 14 14"><rect x="2" y="7" width="5.5" height="5.5" fill="none" stroke="#000" stroke-width="1.6"/><path d="M5 9.5 L11.5 3 M7.5 2.5 H12 V7" fill="none" stroke="#000" stroke-width="2"/></svg>
<div style="left:3461px;top:872px;width:20px;height:19px;background:#f0f0f0;border-top:1px solid #fff;border-left:1px solid #fff;border-right:2px solid #9a9a9a;border-bottom:2px solid #9a9a9a"></div>
<svg style="left:3464px;top:875px;" width="13" height="13" viewBox="0 0 13 13"><path d="M6.5 1.5 V11.5 M1.5 6.5 H11.5" stroke="#000" stroke-width="2.5"/></svg>
<div style="left:9px;top:895px;width:3495px;height:369px;background:#fff;border-top:2px solid #1e1e1e;border-left:2px solid #1e1e1e"></div>
<div style="left:3504px;top:897px;width:31px;height:367px;background:#f0f0f0"></div>
<div style="left:3508px;top:897px;width:27px;height:367px;background:repeating-conic-gradient(#f4f4f4 0 25%,#e8e8e8 0 50%) 0 0/2px 2px"></div>
<div style="left:3509px;top:896px;width:25px;height:23px;background:#f0f0f0;border-top:1px solid #fff;border-left:1px solid #fff;border-right:2px solid #8a8a8a;border-bottom:2px solid #8a8a8a"></div>
<svg style="left:3515px;top:903px;" width="12" height="8" viewBox="0 0 12 8"><path d="M1 7 L6 1 L11 7 Z" fill="#111"/></svg>
<div style="left:3510px;top:1235px;width:25px;height:40px;background:#f0f0f0;border-top:1px solid #fff;border-left:1px solid #fff;border-right:2px solid #777"></div>
<div style="left:11px;top:895px;width:3493px;height:369px;overflow:hidden;border-top:2px solid #1e1e1e"><div class="t" style="left:2.5px;top:-7.95px;font-size:17.5px;color:#3a9e3a;font-family:'Liberation Mono', monospace;-webkit-text-stroke:0.15px #3a9e3a"># Compile of multiplex.sv was successful.</div><div class="t" style="left:2.5px;top:14.5px;font-size:17.5px;color:#3a9e3a;font-family:'Liberation Mono', monospace;-webkit-text-stroke:0.15px #3a9e3a"># Compile of seven_seg_display.sv was successful.</div><div class="t" style="left:2.5px;top:36.95px;font-size:17.5px;color:#3a9e3a;font-family:'Liberation Mono', monospace;-webkit-text-stroke:0.15px #3a9e3a"># Compile of seven_seg_testbench.sv was successful.</div><div class="t" style="left:2.5px;top:59.4px;font-size:17.5px;color:#111;font-family:'Liberation Mono', monospace;-webkit-text-stroke:0.15px #111"># 6 compiles, 0 failed with no errors.</div><div class="t" style="left:3px;top:81.125px;font-size:16.5px;color:#111">VSIM 4&gt;</div><div class="t" style="left:69.5px;top:81.85px;font-size:17.5px;color:#111;font-family:'Liberation Mono', monospace;-webkit-text-stroke:0.15px #111">restart -f</div><div class="t" style="left:2.5px;top:104.3px;font-size:17.5px;color:#2a2af8;font-family:'Liberation Mono', monospace;-webkit-text-stroke:0.15px #2a2af8"># ** Note: (vsim-12125) Error and warning message counts have been reset to &#x27;0&#x27; because of &#x27;restart&#x27;.</div><div class="t" style="left:2.5px;top:126.75px;font-size:17.5px;color:#2a2af8;font-family:'Liberation Mono', monospace;-webkit-text-stroke:0.15px #2a2af8"># ** Note: (vsim-3813) Design is being optimized due to module recompilation...</div><div class="t" style="left:2.5px;top:149.2px;font-size:17.5px;color:#2a2af8;font-family:'Liberation Mono', monospace;-webkit-text-stroke:0.15px #2a2af8"># ** Warning: (vopt-10587) Some optimizations are turned off because the +acc switch is in effect. This will cause your simulation to run slowly. Please use -access/-debug to maintain needed visibility. The +acc switch would be deprecated in a future release.</div><div class="t" style="left:2.5px;top:171.65px;font-size:17.5px;color:#2a2af8;font-family:'Liberation Mono', monospace;-webkit-text-stroke:0.15px #2a2af8"># ** Note: (vsim-12126) Error and warning message counts have been restored: Errors=0, Warnings=1.</div><div class="t" style="left:2.5px;top:194.1px;font-size:17.5px;color:#2a2af8;font-family:'Liberation Mono', monospace;-webkit-text-stroke:0.15px #2a2af8"># Loading sv_std.std</div><div class="t" style="left:2.5px;top:216.55px;font-size:17.5px;color:#2a2af8;font-family:'Liberation Mono', monospace;-webkit-text-stroke:0.15px #2a2af8"># Loading work.lab2_cc_testbench(fast)</div><div class="t" style="left:2.5px;top:239.0px;font-size:17.5px;color:#2a2af8;font-family:'Liberation Mono', monospace;-webkit-text-stroke:0.15px #2a2af8"># Loading work.lab2_cc(fast)</div><div class="t" style="left:2.5px;top:261.45px;font-size:17.5px;color:#2a2af8;font-family:'Liberation Mono', monospace;-webkit-text-stroke:0.15px #2a2af8"># Loading iCE40UP.HSOSC(fast)</div><div class="t" style="left:2.5px;top:283.9px;font-size:17.5px;color:#2a2af8;font-family:'Liberation Mono', monospace;-webkit-text-stroke:0.15px #2a2af8"># Loading work.multiplex(fast)</div><div class="t" style="left:2.5px;top:306.35px;font-size:17.5px;color:#2a2af8;font-family:'Liberation Mono', monospace;-webkit-text-stroke:0.15px #2a2af8"># Loading work.seven_seg_display(fast)</div><div class="t" style="left:3px;top:328.075px;font-size:16.5px;color:#111">VSIM 5&gt;</div><div class="t" style="left:69.5px;top:328.8px;font-size:17.5px;color:#111;font-family:'Liberation Mono', monospace;-webkit-text-stroke:0.15px #111">run 200 ns</div><div class="t" style="left:3px;top:350.525px;font-size:16.5px;color:#111">VSIM 6&gt;</div><div class="t" style="left:69.5px;top:351.25px;font-size:17.5px;color:#111;font-family:'Liberation Mono', monospace;-webkit-text-stroke:0.15px #111">run -all</div></div>
</body></html>
